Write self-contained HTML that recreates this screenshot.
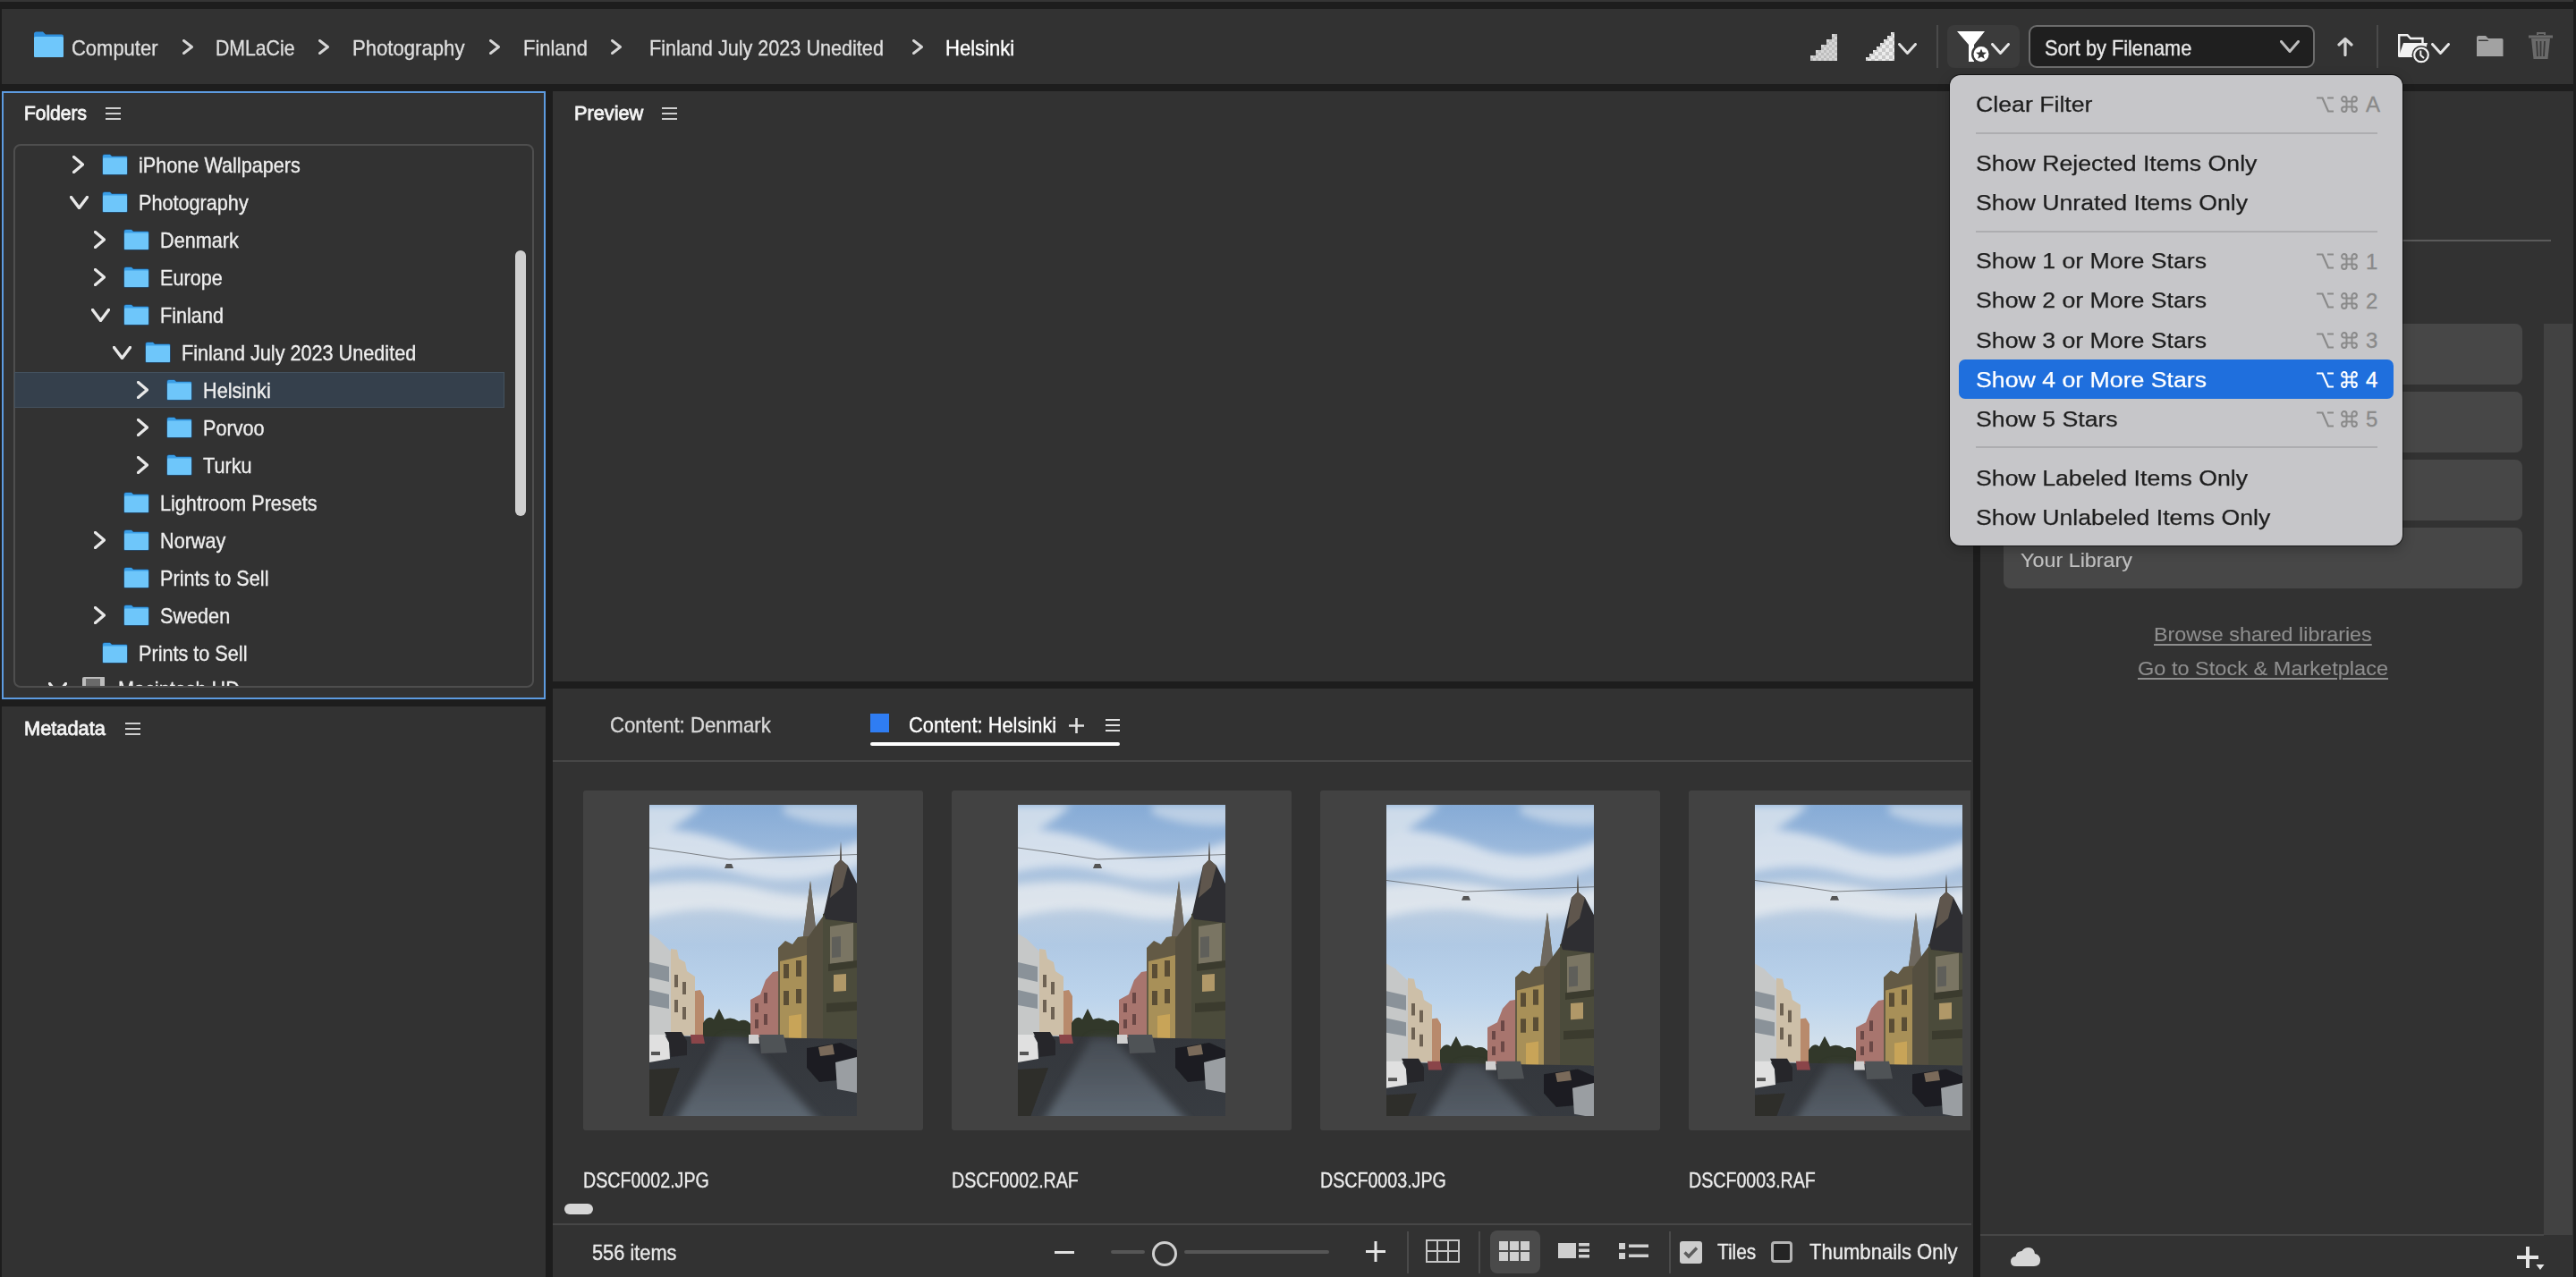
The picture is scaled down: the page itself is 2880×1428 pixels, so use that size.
<!DOCTYPE html><html><head><meta charset="utf-8"><style>
html,body{margin:0;padding:0}
body{width:2880px;height:1428px;position:relative;overflow:hidden;background:#1d1d1d;font-family:"Liberation Sans",sans-serif}
.t{position:absolute;white-space:nowrap}
.r{position:absolute;display:block}
</style></head><body>
<div class="r" style="left:0px;top:0px;width:2880px;height:2px;background:#353535;"></div>
<div class="r" style="left:2px;top:10px;width:2875px;height:84px;background:#323232;"></div>
<svg class="r" style="left:37px;top:34px;" width="35" height="31" viewBox="0 0 35 31"><path d="M1 4 Q1 1.5 3.5 1.5 L11 1.5 L14 4.5 L32 4.5 Q34 4.5 34 6.5 L34 28.5 Q34 30 32.5 30 L2.5 30 Q1 30 1 28.5 Z" fill="#2f8fdc"/><rect x="1" y="7" width="33" height="23" rx="1.5" fill="#6fc7fb"/></svg>
<div class="t" style="left:80px;top:42.69px;font-size:23.4px;line-height:23.4px;color:#dedede;font-weight:normal;-webkit-text-stroke:0.35px #dedede;transform:scaleX(0.9393);transform-origin:0 0;">Computer</div>
<div class="t" style="left:241px;top:42.69px;font-size:23.4px;line-height:23.4px;color:#dedede;font-weight:normal;-webkit-text-stroke:0.35px #dedede;transform:scaleX(0.9074);transform-origin:0 0;">DMLaCie</div>
<div class="t" style="left:394px;top:42.69px;font-size:23.4px;line-height:23.4px;color:#dedede;font-weight:normal;-webkit-text-stroke:0.35px #dedede;transform:scaleX(0.9458);transform-origin:0 0;">Photography</div>
<div class="t" style="left:585px;top:42.69px;font-size:23.4px;line-height:23.4px;color:#dedede;font-weight:normal;-webkit-text-stroke:0.35px #dedede;transform:scaleX(0.9382);transform-origin:0 0;">Finland</div>
<div class="t" style="left:725.5px;top:42.69px;font-size:23.4px;line-height:23.4px;color:#dedede;font-weight:normal;-webkit-text-stroke:0.35px #dedede;transform:scaleX(0.9239);transform-origin:0 0;">Finland July 2023 Unedited</div>
<div class="t" style="left:1056.7px;top:42.69px;font-size:23.4px;line-height:23.4px;color:#ffffff;font-weight:normal;-webkit-text-stroke:0.35px #ffffff;transform:scaleX(0.9436);transform-origin:0 0;">Helsinki</div>
<svg class="r" style="left:203.5px;top:43.5px;" width="12" height="17" viewBox="0 0 12 17"><path d="M1.5 1.5 L10.5 8.5 L1.5 15.5" fill="none" stroke="#d6d6d6" stroke-width="2.9" stroke-linecap="round" stroke-linejoin="round"/></svg>
<svg class="r" style="left:355.5px;top:43.5px;" width="12" height="17" viewBox="0 0 12 17"><path d="M1.5 1.5 L10.5 8.5 L1.5 15.5" fill="none" stroke="#d6d6d6" stroke-width="2.9" stroke-linecap="round" stroke-linejoin="round"/></svg>
<svg class="r" style="left:547px;top:43.5px;" width="12" height="17" viewBox="0 0 12 17"><path d="M1.5 1.5 L10.5 8.5 L1.5 15.5" fill="none" stroke="#d6d6d6" stroke-width="2.9" stroke-linecap="round" stroke-linejoin="round"/></svg>
<svg class="r" style="left:682.5px;top:43.5px;" width="12" height="17" viewBox="0 0 12 17"><path d="M1.5 1.5 L10.5 8.5 L1.5 15.5" fill="none" stroke="#d6d6d6" stroke-width="2.9" stroke-linecap="round" stroke-linejoin="round"/></svg>
<svg class="r" style="left:1019.5px;top:43.5px;" width="12" height="17" viewBox="0 0 12 17"><path d="M1.5 1.5 L10.5 8.5 L1.5 15.5" fill="none" stroke="#d6d6d6" stroke-width="2.9" stroke-linecap="round" stroke-linejoin="round"/></svg>
<svg class="r" style="left:2024px;top:38px;" width="30" height="30" viewBox="0 0 30 30"><rect x="0" y="24" width="3.05" height="3.05" fill="#d6d6d6"/><rect x="0" y="27" width="3.05" height="3.05" fill="#bdbdbd"/><rect x="3" y="24" width="3.05" height="3.05" fill="#bdbdbd"/><rect x="3" y="27" width="3.05" height="3.05" fill="#d6d6d6"/><rect x="6" y="24" width="3.05" height="3.05" fill="#d6d6d6"/><rect x="6" y="27" width="3.05" height="3.05" fill="#bdbdbd"/><rect x="9" y="24" width="3.05" height="3.05" fill="#bdbdbd"/><rect x="9" y="27" width="3.05" height="3.05" fill="#d6d6d6"/><rect x="6" y="18" width="3.05" height="3.05" fill="#d6d6d6"/><rect x="6" y="21" width="3.05" height="3.05" fill="#bdbdbd"/><rect x="9" y="18" width="3.05" height="3.05" fill="#bdbdbd"/><rect x="9" y="21" width="3.05" height="3.05" fill="#d6d6d6"/><rect x="12" y="24" width="3.05" height="3.05" fill="#d6d6d6"/><rect x="12" y="27" width="3.05" height="3.05" fill="#bdbdbd"/><rect x="15" y="24" width="3.05" height="3.05" fill="#bdbdbd"/><rect x="15" y="27" width="3.05" height="3.05" fill="#d6d6d6"/><rect x="12" y="18" width="3.05" height="3.05" fill="#d6d6d6"/><rect x="12" y="21" width="3.05" height="3.05" fill="#bdbdbd"/><rect x="15" y="18" width="3.05" height="3.05" fill="#bdbdbd"/><rect x="15" y="21" width="3.05" height="3.05" fill="#d6d6d6"/><rect x="12" y="12" width="3.05" height="3.05" fill="#d6d6d6"/><rect x="12" y="15" width="3.05" height="3.05" fill="#bdbdbd"/><rect x="15" y="12" width="3.05" height="3.05" fill="#bdbdbd"/><rect x="15" y="15" width="3.05" height="3.05" fill="#d6d6d6"/><rect x="18" y="24" width="3.05" height="3.05" fill="#d6d6d6"/><rect x="18" y="27" width="3.05" height="3.05" fill="#bdbdbd"/><rect x="21" y="24" width="3.05" height="3.05" fill="#bdbdbd"/><rect x="21" y="27" width="3.05" height="3.05" fill="#d6d6d6"/><rect x="18" y="18" width="3.05" height="3.05" fill="#d6d6d6"/><rect x="18" y="21" width="3.05" height="3.05" fill="#bdbdbd"/><rect x="21" y="18" width="3.05" height="3.05" fill="#bdbdbd"/><rect x="21" y="21" width="3.05" height="3.05" fill="#d6d6d6"/><rect x="18" y="12" width="3.05" height="3.05" fill="#d6d6d6"/><rect x="18" y="15" width="3.05" height="3.05" fill="#bdbdbd"/><rect x="21" y="12" width="3.05" height="3.05" fill="#bdbdbd"/><rect x="21" y="15" width="3.05" height="3.05" fill="#d6d6d6"/><rect x="18" y="6" width="3.05" height="3.05" fill="#d6d6d6"/><rect x="18" y="9" width="3.05" height="3.05" fill="#bdbdbd"/><rect x="21" y="6" width="3.05" height="3.05" fill="#bdbdbd"/><rect x="21" y="9" width="3.05" height="3.05" fill="#d6d6d6"/><rect x="24" y="24" width="3.05" height="3.05" fill="#d6d6d6"/><rect x="24" y="27" width="3.05" height="3.05" fill="#bdbdbd"/><rect x="27" y="24" width="3.05" height="3.05" fill="#bdbdbd"/><rect x="27" y="27" width="3.05" height="3.05" fill="#d6d6d6"/><rect x="24" y="18" width="3.05" height="3.05" fill="#d6d6d6"/><rect x="24" y="21" width="3.05" height="3.05" fill="#bdbdbd"/><rect x="27" y="18" width="3.05" height="3.05" fill="#bdbdbd"/><rect x="27" y="21" width="3.05" height="3.05" fill="#d6d6d6"/><rect x="24" y="12" width="3.05" height="3.05" fill="#d6d6d6"/><rect x="24" y="15" width="3.05" height="3.05" fill="#bdbdbd"/><rect x="27" y="12" width="3.05" height="3.05" fill="#bdbdbd"/><rect x="27" y="15" width="3.05" height="3.05" fill="#d6d6d6"/><rect x="24" y="6" width="3.05" height="3.05" fill="#d6d6d6"/><rect x="24" y="9" width="3.05" height="3.05" fill="#bdbdbd"/><rect x="27" y="6" width="3.05" height="3.05" fill="#bdbdbd"/><rect x="27" y="9" width="3.05" height="3.05" fill="#d6d6d6"/><rect x="24" y="0" width="3.05" height="3.05" fill="#d6d6d6"/><rect x="24" y="3" width="3.05" height="3.05" fill="#bdbdbd"/><rect x="27" y="0" width="3.05" height="3.05" fill="#bdbdbd"/><rect x="27" y="3" width="3.05" height="3.05" fill="#d6d6d6"/></svg>
<svg class="r" style="left:2086px;top:36px;" width="32" height="32" viewBox="0 0 32 32"><rect x="0" y="28" width="2.05" height="2.05" fill="#ececec"/><rect x="0" y="30" width="2.05" height="2.05" fill="#c9c9c9"/><rect x="2" y="28" width="2.05" height="2.05" fill="#c9c9c9"/><rect x="2" y="30" width="2.05" height="2.05" fill="#ececec"/><rect x="4" y="28" width="2.05" height="2.05" fill="#c9c9c9"/><rect x="4" y="30" width="2.05" height="2.05" fill="#ececec"/><rect x="6" y="28" width="2.05" height="2.05" fill="#ececec"/><rect x="6" y="30" width="2.05" height="2.05" fill="#c9c9c9"/><rect x="4" y="24" width="2.05" height="2.05" fill="#ececec"/><rect x="4" y="26" width="2.05" height="2.05" fill="#c9c9c9"/><rect x="6" y="24" width="2.05" height="2.05" fill="#c9c9c9"/><rect x="6" y="26" width="2.05" height="2.05" fill="#ececec"/><rect x="8" y="28" width="2.05" height="2.05" fill="#ececec"/><rect x="8" y="30" width="2.05" height="2.05" fill="#c9c9c9"/><rect x="10" y="28" width="2.05" height="2.05" fill="#c9c9c9"/><rect x="10" y="30" width="2.05" height="2.05" fill="#ececec"/><rect x="8" y="24" width="2.05" height="2.05" fill="#c9c9c9"/><rect x="8" y="26" width="2.05" height="2.05" fill="#ececec"/><rect x="10" y="24" width="2.05" height="2.05" fill="#ececec"/><rect x="10" y="26" width="2.05" height="2.05" fill="#c9c9c9"/><rect x="8" y="20" width="2.05" height="2.05" fill="#ececec"/><rect x="8" y="22" width="2.05" height="2.05" fill="#c9c9c9"/><rect x="10" y="20" width="2.05" height="2.05" fill="#c9c9c9"/><rect x="10" y="22" width="2.05" height="2.05" fill="#ececec"/><rect x="12" y="28" width="2.05" height="2.05" fill="#c9c9c9"/><rect x="12" y="30" width="2.05" height="2.05" fill="#ececec"/><rect x="14" y="28" width="2.05" height="2.05" fill="#ececec"/><rect x="14" y="30" width="2.05" height="2.05" fill="#c9c9c9"/><rect x="12" y="24" width="2.05" height="2.05" fill="#ececec"/><rect x="12" y="26" width="2.05" height="2.05" fill="#c9c9c9"/><rect x="14" y="24" width="2.05" height="2.05" fill="#c9c9c9"/><rect x="14" y="26" width="2.05" height="2.05" fill="#ececec"/><rect x="12" y="20" width="2.05" height="2.05" fill="#c9c9c9"/><rect x="12" y="22" width="2.05" height="2.05" fill="#ececec"/><rect x="14" y="20" width="2.05" height="2.05" fill="#ececec"/><rect x="14" y="22" width="2.05" height="2.05" fill="#c9c9c9"/><rect x="12" y="16" width="2.05" height="2.05" fill="#ececec"/><rect x="12" y="18" width="2.05" height="2.05" fill="#c9c9c9"/><rect x="14" y="16" width="2.05" height="2.05" fill="#c9c9c9"/><rect x="14" y="18" width="2.05" height="2.05" fill="#ececec"/><rect x="16" y="28" width="2.05" height="2.05" fill="#ececec"/><rect x="16" y="30" width="2.05" height="2.05" fill="#c9c9c9"/><rect x="18" y="28" width="2.05" height="2.05" fill="#c9c9c9"/><rect x="18" y="30" width="2.05" height="2.05" fill="#ececec"/><rect x="16" y="24" width="2.05" height="2.05" fill="#c9c9c9"/><rect x="16" y="26" width="2.05" height="2.05" fill="#ececec"/><rect x="18" y="24" width="2.05" height="2.05" fill="#ececec"/><rect x="18" y="26" width="2.05" height="2.05" fill="#c9c9c9"/><rect x="16" y="20" width="2.05" height="2.05" fill="#ececec"/><rect x="16" y="22" width="2.05" height="2.05" fill="#c9c9c9"/><rect x="18" y="20" width="2.05" height="2.05" fill="#c9c9c9"/><rect x="18" y="22" width="2.05" height="2.05" fill="#ececec"/><rect x="16" y="16" width="2.05" height="2.05" fill="#c9c9c9"/><rect x="16" y="18" width="2.05" height="2.05" fill="#ececec"/><rect x="18" y="16" width="2.05" height="2.05" fill="#ececec"/><rect x="18" y="18" width="2.05" height="2.05" fill="#c9c9c9"/><rect x="16" y="12" width="2.05" height="2.05" fill="#ececec"/><rect x="16" y="14" width="2.05" height="2.05" fill="#c9c9c9"/><rect x="18" y="12" width="2.05" height="2.05" fill="#c9c9c9"/><rect x="18" y="14" width="2.05" height="2.05" fill="#ececec"/><rect x="20" y="28" width="2.05" height="2.05" fill="#c9c9c9"/><rect x="20" y="30" width="2.05" height="2.05" fill="#ececec"/><rect x="22" y="28" width="2.05" height="2.05" fill="#ececec"/><rect x="22" y="30" width="2.05" height="2.05" fill="#c9c9c9"/><rect x="20" y="24" width="2.05" height="2.05" fill="#ececec"/><rect x="20" y="26" width="2.05" height="2.05" fill="#c9c9c9"/><rect x="22" y="24" width="2.05" height="2.05" fill="#c9c9c9"/><rect x="22" y="26" width="2.05" height="2.05" fill="#ececec"/><rect x="20" y="20" width="2.05" height="2.05" fill="#c9c9c9"/><rect x="20" y="22" width="2.05" height="2.05" fill="#ececec"/><rect x="22" y="20" width="2.05" height="2.05" fill="#ececec"/><rect x="22" y="22" width="2.05" height="2.05" fill="#c9c9c9"/><rect x="20" y="16" width="2.05" height="2.05" fill="#ececec"/><rect x="20" y="18" width="2.05" height="2.05" fill="#c9c9c9"/><rect x="22" y="16" width="2.05" height="2.05" fill="#c9c9c9"/><rect x="22" y="18" width="2.05" height="2.05" fill="#ececec"/><rect x="20" y="12" width="2.05" height="2.05" fill="#c9c9c9"/><rect x="20" y="14" width="2.05" height="2.05" fill="#ececec"/><rect x="22" y="12" width="2.05" height="2.05" fill="#ececec"/><rect x="22" y="14" width="2.05" height="2.05" fill="#c9c9c9"/><rect x="20" y="8" width="2.05" height="2.05" fill="#ececec"/><rect x="20" y="10" width="2.05" height="2.05" fill="#c9c9c9"/><rect x="22" y="8" width="2.05" height="2.05" fill="#c9c9c9"/><rect x="22" y="10" width="2.05" height="2.05" fill="#ececec"/><rect x="24" y="28" width="2.05" height="2.05" fill="#ececec"/><rect x="24" y="30" width="2.05" height="2.05" fill="#c9c9c9"/><rect x="26" y="28" width="2.05" height="2.05" fill="#c9c9c9"/><rect x="26" y="30" width="2.05" height="2.05" fill="#ececec"/><rect x="24" y="24" width="2.05" height="2.05" fill="#c9c9c9"/><rect x="24" y="26" width="2.05" height="2.05" fill="#ececec"/><rect x="26" y="24" width="2.05" height="2.05" fill="#ececec"/><rect x="26" y="26" width="2.05" height="2.05" fill="#c9c9c9"/><rect x="24" y="20" width="2.05" height="2.05" fill="#ececec"/><rect x="24" y="22" width="2.05" height="2.05" fill="#c9c9c9"/><rect x="26" y="20" width="2.05" height="2.05" fill="#c9c9c9"/><rect x="26" y="22" width="2.05" height="2.05" fill="#ececec"/><rect x="24" y="16" width="2.05" height="2.05" fill="#c9c9c9"/><rect x="24" y="18" width="2.05" height="2.05" fill="#ececec"/><rect x="26" y="16" width="2.05" height="2.05" fill="#ececec"/><rect x="26" y="18" width="2.05" height="2.05" fill="#c9c9c9"/><rect x="24" y="12" width="2.05" height="2.05" fill="#ececec"/><rect x="24" y="14" width="2.05" height="2.05" fill="#c9c9c9"/><rect x="26" y="12" width="2.05" height="2.05" fill="#c9c9c9"/><rect x="26" y="14" width="2.05" height="2.05" fill="#ececec"/><rect x="24" y="8" width="2.05" height="2.05" fill="#c9c9c9"/><rect x="24" y="10" width="2.05" height="2.05" fill="#ececec"/><rect x="26" y="8" width="2.05" height="2.05" fill="#ececec"/><rect x="26" y="10" width="2.05" height="2.05" fill="#c9c9c9"/><rect x="24" y="4" width="2.05" height="2.05" fill="#ececec"/><rect x="24" y="6" width="2.05" height="2.05" fill="#c9c9c9"/><rect x="26" y="4" width="2.05" height="2.05" fill="#c9c9c9"/><rect x="26" y="6" width="2.05" height="2.05" fill="#ececec"/><rect x="28" y="28" width="2.05" height="2.05" fill="#c9c9c9"/><rect x="28" y="30" width="2.05" height="2.05" fill="#ececec"/><rect x="30" y="28" width="2.05" height="2.05" fill="#ececec"/><rect x="30" y="30" width="2.05" height="2.05" fill="#c9c9c9"/><rect x="28" y="24" width="2.05" height="2.05" fill="#ececec"/><rect x="28" y="26" width="2.05" height="2.05" fill="#c9c9c9"/><rect x="30" y="24" width="2.05" height="2.05" fill="#c9c9c9"/><rect x="30" y="26" width="2.05" height="2.05" fill="#ececec"/><rect x="28" y="20" width="2.05" height="2.05" fill="#c9c9c9"/><rect x="28" y="22" width="2.05" height="2.05" fill="#ececec"/><rect x="30" y="20" width="2.05" height="2.05" fill="#ececec"/><rect x="30" y="22" width="2.05" height="2.05" fill="#c9c9c9"/><rect x="28" y="16" width="2.05" height="2.05" fill="#ececec"/><rect x="28" y="18" width="2.05" height="2.05" fill="#c9c9c9"/><rect x="30" y="16" width="2.05" height="2.05" fill="#c9c9c9"/><rect x="30" y="18" width="2.05" height="2.05" fill="#ececec"/><rect x="28" y="12" width="2.05" height="2.05" fill="#c9c9c9"/><rect x="28" y="14" width="2.05" height="2.05" fill="#ececec"/><rect x="30" y="12" width="2.05" height="2.05" fill="#ececec"/><rect x="30" y="14" width="2.05" height="2.05" fill="#c9c9c9"/><rect x="28" y="8" width="2.05" height="2.05" fill="#ececec"/><rect x="28" y="10" width="2.05" height="2.05" fill="#c9c9c9"/><rect x="30" y="8" width="2.05" height="2.05" fill="#c9c9c9"/><rect x="30" y="10" width="2.05" height="2.05" fill="#ececec"/><rect x="28" y="4" width="2.05" height="2.05" fill="#c9c9c9"/><rect x="28" y="6" width="2.05" height="2.05" fill="#ececec"/><rect x="30" y="4" width="2.05" height="2.05" fill="#ececec"/><rect x="30" y="6" width="2.05" height="2.05" fill="#c9c9c9"/><rect x="28" y="0" width="2.05" height="2.05" fill="#ececec"/><rect x="28" y="2" width="2.05" height="2.05" fill="#c9c9c9"/><rect x="30" y="0" width="2.05" height="2.05" fill="#c9c9c9"/><rect x="30" y="2" width="2.05" height="2.05" fill="#ececec"/></svg>
<svg class="r" style="left:2122px;top:48px;" width="21" height="13" viewBox="0 0 21 13"><path d="M1.5 1.5 L10.5 11.5 L19.5 1.5" fill="none" stroke="#e0e0e0" stroke-width="3" stroke-linecap="round" stroke-linejoin="round"/></svg>
<div class="r" style="left:2165px;top:28px;width:2px;height:48px;background:#4a4a4a;"></div>
<div class="r" style="left:2177px;top:28px;width:81px;height:48px;background:#3b3b3b;border-radius:8px;"></div>
<svg class="r" style="left:2188px;top:35px;" width="40" height="37" viewBox="0 0 40 37"><path d="M0 0 L31 0 L19 15 L19 34 L13 34 L13 15 Z" fill="#ffffff"/><circle cx="27" cy="25.5" r="11" fill="#3b3b3b"/><circle cx="27" cy="25.5" r="8.5" fill="#ffffff"/><path d="M27 19.5 L28.6 23.6 L33 23.8 L29.5 26.6 L30.8 30.8 L27 28.4 L23.2 30.8 L24.5 26.6 L21 23.8 L25.4 23.6 Z" fill="#333"/></svg>
<svg class="r" style="left:2226px;top:48px;" width="21" height="13" viewBox="0 0 21 13"><path d="M1.5 1.5 L10.5 11.5 L19.5 1.5" fill="none" stroke="#e6e6e6" stroke-width="3" stroke-linecap="round" stroke-linejoin="round"/></svg>
<div class="r" style="left:2268px;top:28px;width:320px;height:48px;background:#1f1f1f;border:2px solid #6c6c6c;border-radius:9px;box-sizing:border-box;"></div>
<div class="t" style="left:2285.7px;top:41.68px;font-size:24px;line-height:24px;color:#e8e8e8;font-weight:normal;-webkit-text-stroke:0.35px #e8e8e8;transform:scaleX(0.9058);transform-origin:0 0;">Sort by Filename</div>
<svg class="r" style="left:2549px;top:45px;" width="22" height="14" viewBox="0 0 22 14"><path d="M1.5 1.5 L11.0 12.5 L20.5 1.5" fill="none" stroke="#bdbdbd" stroke-width="3" stroke-linecap="round" stroke-linejoin="round"/></svg>
<svg class="r" style="left:2613px;top:41px;" width="18" height="22" viewBox="0 0 18 22"><path d="M9 20.5 L9 2.5 M2 9 L9 2.5 L16 9" fill="none" stroke="#d4d4d4" stroke-width="3.2" stroke-linecap="round" stroke-linejoin="round"/></svg>
<div class="r" style="left:2657px;top:28px;width:2px;height:48px;background:#4a4a4a;"></div>
<svg class="r" style="left:2681px;top:38px;" width="36" height="33" viewBox="0 0 36 33"><path d="M1.2 25.5 L1.2 1.2 L10.5 1.2 L14 5 L27.5 5 L27.5 10" fill="none" stroke="#f2f2f2" stroke-width="2.4"/><path d="M0.5 26 L6 10 L33 10 L28 26 Z" fill="#f2f2f2"/><circle cx="26" cy="23.4" r="10.5" fill="#323232"/><circle cx="26" cy="23.4" r="7.8" fill="none" stroke="#f2f2f2" stroke-width="2.2"/><path d="M25.3 18.5 L25.3 23.8 L29 27" fill="none" stroke="#f2f2f2" stroke-width="2"/></svg>
<svg class="r" style="left:2718px;top:48px;" width="21" height="13" viewBox="0 0 21 13"><path d="M1.5 1.5 L10.5 11.5 L19.5 1.5" fill="none" stroke="#e6e6e6" stroke-width="3" stroke-linecap="round" stroke-linejoin="round"/></svg>
<svg class="r" style="left:2769px;top:40px;" width="30" height="23" viewBox="0 0 30 23"><path d="M0 2 Q0 0 2 0 L10 0 L13 3 L28 3 Q29.5 3 29.5 4.5 L29.5 23 L0 23 Z" fill="#a2a2a2"/><path d="M2 4.5 L12 4.5 L13.5 6 L2 6 Z" fill="#3a3a3a"/></svg>
<svg class="r" style="left:2827px;top:36px;" width="28" height="31" viewBox="0 0 28 31"><path d="M10 3 L10 1 L18 1 L18 3" fill="none" stroke="#6a6a6a" stroke-width="2"/><rect x="0" y="3.5" width="27" height="3" fill="#6a6a6a"/><path d="M3 7 L5.5 30 L21.5 30 L24 7 Z" fill="#6a6a6a"/><path d="M9 10 L10 27 M13.5 10 L13.5 27 M18 10 L17 27" stroke="#3a3a3a" stroke-width="1.8"/></svg>
<div class="r" style="left:2px;top:102px;width:608px;height:680px;background:#323232;border:2px solid #5d9be0;box-sizing:border-box;"></div>
<div class="t" style="left:26.8px;top:116.05px;font-size:21.8px;line-height:21.8px;color:#f4f4f4;font-weight:normal;-webkit-text-stroke:0.8px #f4f4f4;transform:scaleX(0.9617);transform-origin:0 0;">Folders</div>
<svg class="r" style="left:118px;top:120px;" width="17" height="14" viewBox="0 0 17 14"><rect x="0" y="0" width="17" height="2" fill="#cfcfcf"/><rect x="0" y="6.0" width="17" height="2" fill="#cfcfcf"/><rect x="0" y="12" width="17" height="2" fill="#cfcfcf"/></svg>
<div class="r" style="left:15px;top:161px;width:582px;height:608px;background:transparent;border:2px solid #4e4e4e;border-radius:8px;box-sizing:border-box;"></div>
<div class="r" style="left:16px;top:416px;width:548px;height:40px;background:#35404c;border:1px solid #44525f;box-sizing:border-box;"></div>
<svg class="r" style="left:81.2px;top:173.7px;" width="13" height="20" viewBox="0 0 13 20"><path d="M1.5 1.5 L11.5 10.0 L1.5 18.5" fill="none" stroke="#e8e8e8" stroke-width="3.3" stroke-linecap="round" stroke-linejoin="round"/></svg>
<svg class="r" style="left:114px;top:172px;" width="29" height="24" viewBox="0 0 29 24"><path d="M0.5 2.5 Q0.5 0.5 2.5 0.5 L9 0.5 L11 2.5 L27 2.5 Q28.5 2.5 28.5 4 L28.5 22.5 Q28.5 23.5 27.5 23.5 L1.5 23.5 Q0.5 23.5 0.5 22.5 Z" fill="#1b5e99"/><path d="M1 3 Q1 1 3 1 L9 1 L11 3 L27 3 Q28 3 28 4 L28 5 L1 5 Z" fill="#3a9ee6"/><rect x="1" y="4.5" width="27" height="18.5" rx="0.8" fill="#6ec6fa"/></svg>
<div class="t" style="left:154.5px;top:174.19px;font-size:23.4px;line-height:23.4px;color:#eeeeee;font-weight:normal;-webkit-text-stroke:0.35px #eeeeee;transform:scaleX(0.9250);transform-origin:0 0;">iPhone Wallpapers</div>
<svg class="r" style="left:77.5px;top:218.5px;" width="21" height="15" viewBox="0 0 21 15"><path d="M1.5 1.5 L10.5 13.5 L19.5 1.5" fill="none" stroke="#e8e8e8" stroke-width="3.4" stroke-linecap="round" stroke-linejoin="round"/></svg>
<svg class="r" style="left:114px;top:214px;" width="29" height="24" viewBox="0 0 29 24"><path d="M0.5 2.5 Q0.5 0.5 2.5 0.5 L9 0.5 L11 2.5 L27 2.5 Q28.5 2.5 28.5 4 L28.5 22.5 Q28.5 23.5 27.5 23.5 L1.5 23.5 Q0.5 23.5 0.5 22.5 Z" fill="#1b5e99"/><path d="M1 3 Q1 1 3 1 L9 1 L11 3 L27 3 Q28 3 28 4 L28 5 L1 5 Z" fill="#3a9ee6"/><rect x="1" y="4.5" width="27" height="18.5" rx="0.8" fill="#6ec6fa"/></svg>
<div class="t" style="left:154.5px;top:216.19px;font-size:23.4px;line-height:23.4px;color:#eeeeee;font-weight:normal;-webkit-text-stroke:0.35px #eeeeee;transform:scaleX(0.9250);transform-origin:0 0;">Photography</div>
<svg class="r" style="left:105.2px;top:257.7px;" width="13" height="20" viewBox="0 0 13 20"><path d="M1.5 1.5 L11.5 10.0 L1.5 18.5" fill="none" stroke="#e8e8e8" stroke-width="3.3" stroke-linecap="round" stroke-linejoin="round"/></svg>
<svg class="r" style="left:138px;top:256px;" width="29" height="24" viewBox="0 0 29 24"><path d="M0.5 2.5 Q0.5 0.5 2.5 0.5 L9 0.5 L11 2.5 L27 2.5 Q28.5 2.5 28.5 4 L28.5 22.5 Q28.5 23.5 27.5 23.5 L1.5 23.5 Q0.5 23.5 0.5 22.5 Z" fill="#1b5e99"/><path d="M1 3 Q1 1 3 1 L9 1 L11 3 L27 3 Q28 3 28 4 L28 5 L1 5 Z" fill="#3a9ee6"/><rect x="1" y="4.5" width="27" height="18.5" rx="0.8" fill="#6ec6fa"/></svg>
<div class="t" style="left:178.5px;top:258.19px;font-size:23.4px;line-height:23.4px;color:#eeeeee;font-weight:normal;-webkit-text-stroke:0.35px #eeeeee;transform:scaleX(0.9250);transform-origin:0 0;">Denmark</div>
<svg class="r" style="left:105.2px;top:299.7px;" width="13" height="20" viewBox="0 0 13 20"><path d="M1.5 1.5 L11.5 10.0 L1.5 18.5" fill="none" stroke="#e8e8e8" stroke-width="3.3" stroke-linecap="round" stroke-linejoin="round"/></svg>
<svg class="r" style="left:138px;top:298px;" width="29" height="24" viewBox="0 0 29 24"><path d="M0.5 2.5 Q0.5 0.5 2.5 0.5 L9 0.5 L11 2.5 L27 2.5 Q28.5 2.5 28.5 4 L28.5 22.5 Q28.5 23.5 27.5 23.5 L1.5 23.5 Q0.5 23.5 0.5 22.5 Z" fill="#1b5e99"/><path d="M1 3 Q1 1 3 1 L9 1 L11 3 L27 3 Q28 3 28 4 L28 5 L1 5 Z" fill="#3a9ee6"/><rect x="1" y="4.5" width="27" height="18.5" rx="0.8" fill="#6ec6fa"/></svg>
<div class="t" style="left:178.5px;top:300.19px;font-size:23.4px;line-height:23.4px;color:#eeeeee;font-weight:normal;-webkit-text-stroke:0.35px #eeeeee;transform:scaleX(0.9250);transform-origin:0 0;">Europe</div>
<svg class="r" style="left:101.5px;top:344.5px;" width="21" height="15" viewBox="0 0 21 15"><path d="M1.5 1.5 L10.5 13.5 L19.5 1.5" fill="none" stroke="#e8e8e8" stroke-width="3.4" stroke-linecap="round" stroke-linejoin="round"/></svg>
<svg class="r" style="left:138px;top:340px;" width="29" height="24" viewBox="0 0 29 24"><path d="M0.5 2.5 Q0.5 0.5 2.5 0.5 L9 0.5 L11 2.5 L27 2.5 Q28.5 2.5 28.5 4 L28.5 22.5 Q28.5 23.5 27.5 23.5 L1.5 23.5 Q0.5 23.5 0.5 22.5 Z" fill="#1b5e99"/><path d="M1 3 Q1 1 3 1 L9 1 L11 3 L27 3 Q28 3 28 4 L28 5 L1 5 Z" fill="#3a9ee6"/><rect x="1" y="4.5" width="27" height="18.5" rx="0.8" fill="#6ec6fa"/></svg>
<div class="t" style="left:178.5px;top:342.19px;font-size:23.4px;line-height:23.4px;color:#eeeeee;font-weight:normal;-webkit-text-stroke:0.35px #eeeeee;transform:scaleX(0.9250);transform-origin:0 0;">Finland</div>
<svg class="r" style="left:125.5px;top:386.5px;" width="21" height="15" viewBox="0 0 21 15"><path d="M1.5 1.5 L10.5 13.5 L19.5 1.5" fill="none" stroke="#e8e8e8" stroke-width="3.4" stroke-linecap="round" stroke-linejoin="round"/></svg>
<svg class="r" style="left:162px;top:382px;" width="29" height="24" viewBox="0 0 29 24"><path d="M0.5 2.5 Q0.5 0.5 2.5 0.5 L9 0.5 L11 2.5 L27 2.5 Q28.5 2.5 28.5 4 L28.5 22.5 Q28.5 23.5 27.5 23.5 L1.5 23.5 Q0.5 23.5 0.5 22.5 Z" fill="#1b5e99"/><path d="M1 3 Q1 1 3 1 L9 1 L11 3 L27 3 Q28 3 28 4 L28 5 L1 5 Z" fill="#3a9ee6"/><rect x="1" y="4.5" width="27" height="18.5" rx="0.8" fill="#6ec6fa"/></svg>
<div class="t" style="left:202.5px;top:384.19px;font-size:23.4px;line-height:23.4px;color:#eeeeee;font-weight:normal;-webkit-text-stroke:0.35px #eeeeee;transform:scaleX(0.9250);transform-origin:0 0;">Finland July 2023 Unedited</div>
<svg class="r" style="left:153.2px;top:425.7px;" width="13" height="20" viewBox="0 0 13 20"><path d="M1.5 1.5 L11.5 10.0 L1.5 18.5" fill="none" stroke="#e8e8e8" stroke-width="3.3" stroke-linecap="round" stroke-linejoin="round"/></svg>
<svg class="r" style="left:186px;top:424px;" width="29" height="24" viewBox="0 0 29 24"><path d="M0.5 2.5 Q0.5 0.5 2.5 0.5 L9 0.5 L11 2.5 L27 2.5 Q28.5 2.5 28.5 4 L28.5 22.5 Q28.5 23.5 27.5 23.5 L1.5 23.5 Q0.5 23.5 0.5 22.5 Z" fill="#1b5e99"/><path d="M1 3 Q1 1 3 1 L9 1 L11 3 L27 3 Q28 3 28 4 L28 5 L1 5 Z" fill="#3a9ee6"/><rect x="1" y="4.5" width="27" height="18.5" rx="0.8" fill="#6ec6fa"/></svg>
<div class="t" style="left:226.5px;top:426.19px;font-size:23.4px;line-height:23.4px;color:#eeeeee;font-weight:normal;-webkit-text-stroke:0.35px #eeeeee;transform:scaleX(0.9250);transform-origin:0 0;">Helsinki</div>
<svg class="r" style="left:153.2px;top:467.7px;" width="13" height="20" viewBox="0 0 13 20"><path d="M1.5 1.5 L11.5 10.0 L1.5 18.5" fill="none" stroke="#e8e8e8" stroke-width="3.3" stroke-linecap="round" stroke-linejoin="round"/></svg>
<svg class="r" style="left:186px;top:466px;" width="29" height="24" viewBox="0 0 29 24"><path d="M0.5 2.5 Q0.5 0.5 2.5 0.5 L9 0.5 L11 2.5 L27 2.5 Q28.5 2.5 28.5 4 L28.5 22.5 Q28.5 23.5 27.5 23.5 L1.5 23.5 Q0.5 23.5 0.5 22.5 Z" fill="#1b5e99"/><path d="M1 3 Q1 1 3 1 L9 1 L11 3 L27 3 Q28 3 28 4 L28 5 L1 5 Z" fill="#3a9ee6"/><rect x="1" y="4.5" width="27" height="18.5" rx="0.8" fill="#6ec6fa"/></svg>
<div class="t" style="left:226.5px;top:468.19px;font-size:23.4px;line-height:23.4px;color:#eeeeee;font-weight:normal;-webkit-text-stroke:0.35px #eeeeee;transform:scaleX(0.9250);transform-origin:0 0;">Porvoo</div>
<svg class="r" style="left:153.2px;top:509.7px;" width="13" height="20" viewBox="0 0 13 20"><path d="M1.5 1.5 L11.5 10.0 L1.5 18.5" fill="none" stroke="#e8e8e8" stroke-width="3.3" stroke-linecap="round" stroke-linejoin="round"/></svg>
<svg class="r" style="left:186px;top:508px;" width="29" height="24" viewBox="0 0 29 24"><path d="M0.5 2.5 Q0.5 0.5 2.5 0.5 L9 0.5 L11 2.5 L27 2.5 Q28.5 2.5 28.5 4 L28.5 22.5 Q28.5 23.5 27.5 23.5 L1.5 23.5 Q0.5 23.5 0.5 22.5 Z" fill="#1b5e99"/><path d="M1 3 Q1 1 3 1 L9 1 L11 3 L27 3 Q28 3 28 4 L28 5 L1 5 Z" fill="#3a9ee6"/><rect x="1" y="4.5" width="27" height="18.5" rx="0.8" fill="#6ec6fa"/></svg>
<div class="t" style="left:226.5px;top:510.19px;font-size:23.4px;line-height:23.4px;color:#eeeeee;font-weight:normal;-webkit-text-stroke:0.35px #eeeeee;transform:scaleX(0.9250);transform-origin:0 0;">Turku</div>
<svg class="r" style="left:138px;top:550px;" width="29" height="24" viewBox="0 0 29 24"><path d="M0.5 2.5 Q0.5 0.5 2.5 0.5 L9 0.5 L11 2.5 L27 2.5 Q28.5 2.5 28.5 4 L28.5 22.5 Q28.5 23.5 27.5 23.5 L1.5 23.5 Q0.5 23.5 0.5 22.5 Z" fill="#1b5e99"/><path d="M1 3 Q1 1 3 1 L9 1 L11 3 L27 3 Q28 3 28 4 L28 5 L1 5 Z" fill="#3a9ee6"/><rect x="1" y="4.5" width="27" height="18.5" rx="0.8" fill="#6ec6fa"/></svg>
<div class="t" style="left:178.5px;top:552.19px;font-size:23.4px;line-height:23.4px;color:#eeeeee;font-weight:normal;-webkit-text-stroke:0.35px #eeeeee;transform:scaleX(0.9250);transform-origin:0 0;">Lightroom Presets</div>
<svg class="r" style="left:105.2px;top:593.7px;" width="13" height="20" viewBox="0 0 13 20"><path d="M1.5 1.5 L11.5 10.0 L1.5 18.5" fill="none" stroke="#e8e8e8" stroke-width="3.3" stroke-linecap="round" stroke-linejoin="round"/></svg>
<svg class="r" style="left:138px;top:592px;" width="29" height="24" viewBox="0 0 29 24"><path d="M0.5 2.5 Q0.5 0.5 2.5 0.5 L9 0.5 L11 2.5 L27 2.5 Q28.5 2.5 28.5 4 L28.5 22.5 Q28.5 23.5 27.5 23.5 L1.5 23.5 Q0.5 23.5 0.5 22.5 Z" fill="#1b5e99"/><path d="M1 3 Q1 1 3 1 L9 1 L11 3 L27 3 Q28 3 28 4 L28 5 L1 5 Z" fill="#3a9ee6"/><rect x="1" y="4.5" width="27" height="18.5" rx="0.8" fill="#6ec6fa"/></svg>
<div class="t" style="left:178.5px;top:594.19px;font-size:23.4px;line-height:23.4px;color:#eeeeee;font-weight:normal;-webkit-text-stroke:0.35px #eeeeee;transform:scaleX(0.9250);transform-origin:0 0;">Norway</div>
<svg class="r" style="left:138px;top:634px;" width="29" height="24" viewBox="0 0 29 24"><path d="M0.5 2.5 Q0.5 0.5 2.5 0.5 L9 0.5 L11 2.5 L27 2.5 Q28.5 2.5 28.5 4 L28.5 22.5 Q28.5 23.5 27.5 23.5 L1.5 23.5 Q0.5 23.5 0.5 22.5 Z" fill="#1b5e99"/><path d="M1 3 Q1 1 3 1 L9 1 L11 3 L27 3 Q28 3 28 4 L28 5 L1 5 Z" fill="#3a9ee6"/><rect x="1" y="4.5" width="27" height="18.5" rx="0.8" fill="#6ec6fa"/></svg>
<div class="t" style="left:178.5px;top:636.19px;font-size:23.4px;line-height:23.4px;color:#eeeeee;font-weight:normal;-webkit-text-stroke:0.35px #eeeeee;transform:scaleX(0.9250);transform-origin:0 0;">Prints to Sell</div>
<svg class="r" style="left:105.2px;top:677.7px;" width="13" height="20" viewBox="0 0 13 20"><path d="M1.5 1.5 L11.5 10.0 L1.5 18.5" fill="none" stroke="#e8e8e8" stroke-width="3.3" stroke-linecap="round" stroke-linejoin="round"/></svg>
<svg class="r" style="left:138px;top:676px;" width="29" height="24" viewBox="0 0 29 24"><path d="M0.5 2.5 Q0.5 0.5 2.5 0.5 L9 0.5 L11 2.5 L27 2.5 Q28.5 2.5 28.5 4 L28.5 22.5 Q28.5 23.5 27.5 23.5 L1.5 23.5 Q0.5 23.5 0.5 22.5 Z" fill="#1b5e99"/><path d="M1 3 Q1 1 3 1 L9 1 L11 3 L27 3 Q28 3 28 4 L28 5 L1 5 Z" fill="#3a9ee6"/><rect x="1" y="4.5" width="27" height="18.5" rx="0.8" fill="#6ec6fa"/></svg>
<div class="t" style="left:178.5px;top:678.19px;font-size:23.4px;line-height:23.4px;color:#eeeeee;font-weight:normal;-webkit-text-stroke:0.35px #eeeeee;transform:scaleX(0.9250);transform-origin:0 0;">Sweden</div>
<svg class="r" style="left:114px;top:718px;" width="29" height="24" viewBox="0 0 29 24"><path d="M0.5 2.5 Q0.5 0.5 2.5 0.5 L9 0.5 L11 2.5 L27 2.5 Q28.5 2.5 28.5 4 L28.5 22.5 Q28.5 23.5 27.5 23.5 L1.5 23.5 Q0.5 23.5 0.5 22.5 Z" fill="#1b5e99"/><path d="M1 3 Q1 1 3 1 L9 1 L11 3 L27 3 Q28 3 28 4 L28 5 L1 5 Z" fill="#3a9ee6"/><rect x="1" y="4.5" width="27" height="18.5" rx="0.8" fill="#6ec6fa"/></svg>
<div class="t" style="left:154.5px;top:720.19px;font-size:23.4px;line-height:23.4px;color:#eeeeee;font-weight:normal;-webkit-text-stroke:0.35px #eeeeee;transform:scaleX(0.9250);transform-origin:0 0;">Prints to Sell</div>
<div class="r" style="left:17px;top:740px;width:578px;height:27px;overflow:hidden"><svg class="r" style="left:36.5px;top:22.5px;" width="21" height="15" viewBox="0 0 21 15"><path d="M1.5 1.5 L10.5 13.5 L19.5 1.5" fill="none" stroke="#e8e8e8" stroke-width="3.4" stroke-linecap="round" stroke-linejoin="round"/></svg>
<svg class="r" style="left:74.5px;top:17px;" width="25" height="26" viewBox="0 0 25 26"><rect x="0" y="0" width="26" height="26" rx="2" fill="#bcbcbc"/><rect x="4" y="2" width="16" height="8" fill="#6a6a6a"/></svg>
<div class="t" style="left:114.5px;top:20.19px;font-size:23.4px;line-height:23.4px;color:#eeeeee;font-weight:normal;-webkit-text-stroke:0.35px #eeeeee;transform:scaleX(0.9250);transform-origin:0 0;">Macintosh HD</div>
</div>
<div class="r" style="left:576px;top:280px;width:12px;height:297px;background:#cfcfcf;border-radius:6px;"></div>
<div class="r" style="left:2px;top:790px;width:608px;height:638px;background:#323232;"></div>
<div class="t" style="left:26.8px;top:803.95px;font-size:21.8px;line-height:21.8px;color:#f4f4f4;font-weight:normal;-webkit-text-stroke:0.8px #f4f4f4;transform:scaleX(1.0002);transform-origin:0 0;">Metadata</div>
<svg class="r" style="left:140px;top:808px;" width="17" height="14" viewBox="0 0 17 14"><rect x="0" y="0" width="17" height="2" fill="#cfcfcf"/><rect x="0" y="6.0" width="17" height="2" fill="#cfcfcf"/><rect x="0" y="12" width="17" height="2" fill="#cfcfcf"/></svg>
<div class="r" style="left:618px;top:102px;width:1588px;height:660px;background:#323232;"></div>
<div class="t" style="left:642.3px;top:116.05px;font-size:21.8px;line-height:21.8px;color:#f4f4f4;font-weight:normal;-webkit-text-stroke:0.8px #f4f4f4;transform:scaleX(0.9970);transform-origin:0 0;">Preview</div>
<svg class="r" style="left:740px;top:120px;" width="17" height="14" viewBox="0 0 17 14"><rect x="0" y="0" width="17" height="2" fill="#cfcfcf"/><rect x="0" y="6.0" width="17" height="2" fill="#cfcfcf"/><rect x="0" y="12" width="17" height="2" fill="#cfcfcf"/></svg>
<div class="r" style="left:618px;top:770px;width:1588px;height:658px;background:#323232;"></div>
<div class="t" style="left:681.8px;top:799.18px;font-size:24px;line-height:24px;color:#d8d8d8;font-weight:normal;-webkit-text-stroke:0.35px #d8d8d8;transform:scaleX(0.9233);transform-origin:0 0;">Content: Denmark</div>
<div class="r" style="left:973px;top:798px;width:21px;height:21px;background:#2f7df3;"></div>
<div class="t" style="left:1016.4px;top:799.18px;font-size:24px;line-height:24px;color:#ffffff;font-weight:normal;-webkit-text-stroke:0.35px #ffffff;transform:scaleX(0.9106);transform-origin:0 0;">Content: Helsinki</div>
<svg class="r" style="left:1195px;top:803px;" width="17" height="17" viewBox="0 0 17 17"><path d="M8.5 0 L8.5 17 M0 8.5 L17 8.5" stroke="#e0e0e0" stroke-width="2.6"/></svg>
<svg class="r" style="left:1236px;top:804px;" width="16" height="14" viewBox="0 0 16 14"><rect x="0" y="0" width="16" height="2" fill="#e0e0e0"/><rect x="0" y="6.0" width="16" height="2" fill="#e0e0e0"/><rect x="0" y="12" width="16" height="2" fill="#e0e0e0"/></svg>
<div class="r" style="left:973px;top:830px;width:279px;height:4px;background:#ffffff;border-radius:2px;"></div>
<div class="r" style="left:618px;top:850px;width:1586px;height:2px;background:#474747;"></div>
<div class="r" style="left:652px;top:884px;width:380px;height:380px;background:#424242;border-radius:3px;"></div>
<svg class="r" style="left:726px;top:900px;overflow:hidden;" width="232" height="348" viewBox="0 0 232 348"><defs><linearGradient id="p0sky" x1="0" y1="0" x2="0" y2="1"><stop offset="0" stop-color="#86abd6"/><stop offset="0.15" stop-color="#9bb9dc"/><stop offset="0.32" stop-color="#bccde0"/><stop offset="0.45" stop-color="#b0c9e4"/><stop offset="0.62" stop-color="#bcd4ec"/><stop offset="0.78" stop-color="#d4e1ec"/></linearGradient>
<linearGradient id="p0road" x1="0" y1="0" x2="0" y2="1"><stop offset="0" stop-color="#34373c"/><stop offset="1" stop-color="#3a3f45"/></linearGradient>
<linearGradient id="p0rc" x1="0" y1="0" x2="0" y2="1"><stop offset="0" stop-color="#4a5058"/><stop offset="1" stop-color="#6a7682"/></linearGradient>
<filter id="p0b1" x="-10%" y="-10%" width="120%" height="120%"><feGaussianBlur stdDeviation="0.7"/></filter>
<filter id="p0b5" x="-30%" y="-30%" width="160%" height="160%"><feGaussianBlur stdDeviation="5"/></filter></defs>
<rect width="232" height="348" fill="url(#p0sky)"/>
<g filter="url(#p0b5)" opacity="0.8">
<path d="M-20 30 Q40 20 110 50 Q170 70 250 35 L250 62 Q170 95 105 78 Q45 60 -20 80 Z" fill="#e4eaf1"/>
<path d="M-20 92 Q70 78 130 96 Q190 112 250 88 L250 112 Q180 136 115 122 Q50 108 -20 132 Z" fill="#e6ebf0"/>
<path d="M-20 0 L60 0 Q30 30 -20 45 Z" fill="#dfe7ef"/>
<path d="M150 0 L250 0 L250 20 Q200 30 150 10 Z" fill="#c9d8e8"/>
</g>
<g transform="matrix(1,0,0,1,0,0)">
<path d="M0 48 Q45 54 89 61 Q160 58 232 55.5" stroke="#3d3d3d" stroke-width="0.6" fill="none"/>
<path d="M86 66 L92 66 L94 71 L84 71 Z" fill="#555"/>
<g filter="url(#p0b1)">
<path d="M0 144 L10 150 L24 164 L24 258 L0 258 Z" fill="#c6c8c8"/>
<path d="M0 176 L22 181 L22 198 L0 193 Z M0 207 L22 212 L22 228 L0 224 Z" fill="#8a9299"/>
<path d="M24 161 L31 162 L33 172 L40 176 L42 186 L51 192 L51 258 L24 258 Z" fill="#cdbfa8"/>
<path d="M28 190 L32 190 L32 204 L28 204 Z M37 198 L41 198 L41 212 L37 212 Z M28 218 L32 218 L32 232 L28 232 Z M37 226 L41 226 L41 240 L37 240 Z" fill="#6e6252"/>
<path d="M51 208 L57 207 L61 214 L61 258 L51 258 Z" fill="#b88a6c"/>
<path d="M60 244 Q66 234 72 240 L78 228 L84 240 Q92 236 100 242 Q108 238 114 246 L114 262 L60 262 Z" fill="#30372a"/>
<path d="M113 218 L124 212 L130 196 L138 187 L144 186 L144 262 L113 262 Z" fill="#a8746e"/>
<path d="M118 222 L122 222 L122 232 L118 232 Z M128 210 L132 210 L132 222 L128 222 Z M128 234 L132 234 L132 246 L128 246 Z M118 240 L122 240 L122 250 L118 250 Z" fill="#6a4644"/>
<path d="M144 160 L152 152 L160 156 L166 148 L172 147 L180 85 L187 147 L196 122 L196 266 L144 266 Z" fill="#645a44"/>
<path d="M146 175 L176 168 L176 266 L146 266 Z" fill="#a89058"/>
<path d="M150 178 L156 178 L156 194 L150 194 Z M164 174 L170 174 L170 192 L164 192 Z M150 208 L156 208 L156 224 L150 224 Z M164 206 L170 206 L170 222 L164 222 Z" fill="#5a4e34"/>
<path d="M156 236 L170 234 L170 266 L156 266 Z" fill="#c8a458"/>
<path d="M172 147 L180 85 L187 147 Z" fill="#6e685e"/>
<path d="M176 150 L196 122 L196 268 L176 268 Z" fill="#545040"/>
<path d="M194 122 L232 108 L232 272 L194 270 Z" fill="#4c4b3a"/>
<path d="M195 122 L207 68 L213 62 L214 41 L215 62 L222 68 L232 88 L232 132 L197 128 Z" fill="#2e2e30"/>
<path d="M207 68 L213 62 L214 41 L215 62 L222 68 L216 92 L202 104 Z" fill="#6a6256" opacity="0.8"/>
<path d="M202 136 L228 132 L228 175 L202 178 Z" fill="#7a7464"/>
<path d="M204 148 L214 147 L214 170 L204 171 Z" fill="#5e5e5a"/>
<path d="M200 178 L232 174 L232 182 L200 186 Z" fill="#3a3a2e"/>
<path d="M206 190 L220 189 L220 208 L206 209 Z" fill="#b09868"/>
<path d="M198 222 L232 220 L232 230 L198 232 Z" fill="#3a3a2e"/>
</g>
<path d="M0 258 L232 262 L232 420 L0 420 Z" fill="url(#p0road)"/>
<path d="M82 261 L106 261 L195 360 L25 360 Z" fill="url(#p0rc)" opacity="0.8" filter="url(#p0b5)"/>
<path d="M0 296 L34 294 L10 360 L0 360 Z" fill="#2e2d2a" filter="url(#p0b1)"/>
<g filter="url(#p0b1)">
<path d="M0 257 L17 257 L22 266 L23 284 L0 288 Z" fill="#e0e0e0"/>
<path d="M2 276 L12 276 L12 280 L2 280 Z" fill="#555"/>
<path d="M17 254 L36 254 L42 264 L42 280 L24 282 L22 265 Z" fill="#26282c"/>
<path d="M46 257 L60 257 L62 267 L47 267 Z" fill="#8a4448"/>
<path d="M111 257 L122 257 L123 267 L111 267 Z" fill="#cfcfcf"/>
<path d="M123 257 L150 257 L154 277 L125 278 Z" fill="#505256"/>
<path d="M176 272 L214 266 L232 274 L232 306 L190 310 L176 294 Z" fill="#1c1e22"/>
<path d="M189 271 L205 268 L207 279 L191 281 Z" fill="#7a6a5a"/>
<path d="M208 288 L232 282 L232 322 L210 318 Z" fill="#9a9ea2"/>
</g>
</g></svg>
<div class="t" style="left:652px;top:1308.05px;font-size:24.4px;line-height:24.4px;color:#ececec;font-weight:normal;-webkit-text-stroke:0.35px #ececec;transform:scaleX(0.8050);transform-origin:0 0;">DSCF0002.JPG</div>
<div class="r" style="left:1064px;top:884px;width:380px;height:380px;background:#424242;border-radius:3px;"></div>
<svg class="r" style="left:1138px;top:900px;overflow:hidden;" width="232" height="348" viewBox="0 0 232 348"><defs><linearGradient id="p1sky" x1="0" y1="0" x2="0" y2="1"><stop offset="0" stop-color="#86abd6"/><stop offset="0.15" stop-color="#9bb9dc"/><stop offset="0.32" stop-color="#bccde0"/><stop offset="0.45" stop-color="#b0c9e4"/><stop offset="0.62" stop-color="#bcd4ec"/><stop offset="0.78" stop-color="#d4e1ec"/></linearGradient>
<linearGradient id="p1road" x1="0" y1="0" x2="0" y2="1"><stop offset="0" stop-color="#34373c"/><stop offset="1" stop-color="#3a3f45"/></linearGradient>
<linearGradient id="p1rc" x1="0" y1="0" x2="0" y2="1"><stop offset="0" stop-color="#4a5058"/><stop offset="1" stop-color="#6a7682"/></linearGradient>
<filter id="p1b1" x="-10%" y="-10%" width="120%" height="120%"><feGaussianBlur stdDeviation="0.7"/></filter>
<filter id="p1b5" x="-30%" y="-30%" width="160%" height="160%"><feGaussianBlur stdDeviation="5"/></filter></defs>
<rect width="232" height="348" fill="url(#p1sky)"/>
<g filter="url(#p1b5)" opacity="0.8">
<path d="M-20 30 Q40 20 110 50 Q170 70 250 35 L250 62 Q170 95 105 78 Q45 60 -20 80 Z" fill="#e4eaf1"/>
<path d="M-20 92 Q70 78 130 96 Q190 112 250 88 L250 112 Q180 136 115 122 Q50 108 -20 132 Z" fill="#e6ebf0"/>
<path d="M-20 0 L60 0 Q30 30 -20 45 Z" fill="#dfe7ef"/>
<path d="M150 0 L250 0 L250 20 Q200 30 150 10 Z" fill="#c9d8e8"/>
</g>
<g transform="matrix(1,0,0,1,0,0)">
<path d="M0 48 Q45 54 89 61 Q160 58 232 55.5" stroke="#3d3d3d" stroke-width="0.6" fill="none"/>
<path d="M86 66 L92 66 L94 71 L84 71 Z" fill="#555"/>
<g filter="url(#p1b1)">
<path d="M0 144 L10 150 L24 164 L24 258 L0 258 Z" fill="#c6c8c8"/>
<path d="M0 176 L22 181 L22 198 L0 193 Z M0 207 L22 212 L22 228 L0 224 Z" fill="#8a9299"/>
<path d="M24 161 L31 162 L33 172 L40 176 L42 186 L51 192 L51 258 L24 258 Z" fill="#cdbfa8"/>
<path d="M28 190 L32 190 L32 204 L28 204 Z M37 198 L41 198 L41 212 L37 212 Z M28 218 L32 218 L32 232 L28 232 Z M37 226 L41 226 L41 240 L37 240 Z" fill="#6e6252"/>
<path d="M51 208 L57 207 L61 214 L61 258 L51 258 Z" fill="#b88a6c"/>
<path d="M60 244 Q66 234 72 240 L78 228 L84 240 Q92 236 100 242 Q108 238 114 246 L114 262 L60 262 Z" fill="#30372a"/>
<path d="M113 218 L124 212 L130 196 L138 187 L144 186 L144 262 L113 262 Z" fill="#a8746e"/>
<path d="M118 222 L122 222 L122 232 L118 232 Z M128 210 L132 210 L132 222 L128 222 Z M128 234 L132 234 L132 246 L128 246 Z M118 240 L122 240 L122 250 L118 250 Z" fill="#6a4644"/>
<path d="M144 160 L152 152 L160 156 L166 148 L172 147 L180 85 L187 147 L196 122 L196 266 L144 266 Z" fill="#645a44"/>
<path d="M146 175 L176 168 L176 266 L146 266 Z" fill="#a89058"/>
<path d="M150 178 L156 178 L156 194 L150 194 Z M164 174 L170 174 L170 192 L164 192 Z M150 208 L156 208 L156 224 L150 224 Z M164 206 L170 206 L170 222 L164 222 Z" fill="#5a4e34"/>
<path d="M156 236 L170 234 L170 266 L156 266 Z" fill="#c8a458"/>
<path d="M172 147 L180 85 L187 147 Z" fill="#6e685e"/>
<path d="M176 150 L196 122 L196 268 L176 268 Z" fill="#545040"/>
<path d="M194 122 L232 108 L232 272 L194 270 Z" fill="#4c4b3a"/>
<path d="M195 122 L207 68 L213 62 L214 41 L215 62 L222 68 L232 88 L232 132 L197 128 Z" fill="#2e2e30"/>
<path d="M207 68 L213 62 L214 41 L215 62 L222 68 L216 92 L202 104 Z" fill="#6a6256" opacity="0.8"/>
<path d="M202 136 L228 132 L228 175 L202 178 Z" fill="#7a7464"/>
<path d="M204 148 L214 147 L214 170 L204 171 Z" fill="#5e5e5a"/>
<path d="M200 178 L232 174 L232 182 L200 186 Z" fill="#3a3a2e"/>
<path d="M206 190 L220 189 L220 208 L206 209 Z" fill="#b09868"/>
<path d="M198 222 L232 220 L232 230 L198 232 Z" fill="#3a3a2e"/>
</g>
<path d="M0 258 L232 262 L232 420 L0 420 Z" fill="url(#p1road)"/>
<path d="M82 261 L106 261 L195 360 L25 360 Z" fill="url(#p1rc)" opacity="0.8" filter="url(#p1b5)"/>
<path d="M0 296 L34 294 L10 360 L0 360 Z" fill="#2e2d2a" filter="url(#p1b1)"/>
<g filter="url(#p1b1)">
<path d="M0 257 L17 257 L22 266 L23 284 L0 288 Z" fill="#e0e0e0"/>
<path d="M2 276 L12 276 L12 280 L2 280 Z" fill="#555"/>
<path d="M17 254 L36 254 L42 264 L42 280 L24 282 L22 265 Z" fill="#26282c"/>
<path d="M46 257 L60 257 L62 267 L47 267 Z" fill="#8a4448"/>
<path d="M111 257 L122 257 L123 267 L111 267 Z" fill="#cfcfcf"/>
<path d="M123 257 L150 257 L154 277 L125 278 Z" fill="#505256"/>
<path d="M176 272 L214 266 L232 274 L232 306 L190 310 L176 294 Z" fill="#1c1e22"/>
<path d="M189 271 L205 268 L207 279 L191 281 Z" fill="#7a6a5a"/>
<path d="M208 288 L232 282 L232 322 L210 318 Z" fill="#9a9ea2"/>
</g>
</g></svg>
<div class="t" style="left:1064px;top:1308.05px;font-size:24.4px;line-height:24.4px;color:#ececec;font-weight:normal;-webkit-text-stroke:0.35px #ececec;transform:scaleX(0.8050);transform-origin:0 0;">DSCF0002.RAF</div>
<div class="r" style="left:1476px;top:884px;width:380px;height:380px;background:#424242;border-radius:3px;"></div>
<svg class="r" style="left:1550px;top:900px;overflow:hidden;" width="232" height="348" viewBox="0 0 232 348"><defs><linearGradient id="p2sky" x1="0" y1="0" x2="0" y2="1"><stop offset="0" stop-color="#86abd6"/><stop offset="0.15" stop-color="#9bb9dc"/><stop offset="0.32" stop-color="#bccde0"/><stop offset="0.45" stop-color="#b0c9e4"/><stop offset="0.62" stop-color="#bcd4ec"/><stop offset="0.78" stop-color="#d4e1ec"/></linearGradient>
<linearGradient id="p2road" x1="0" y1="0" x2="0" y2="1"><stop offset="0" stop-color="#34373c"/><stop offset="1" stop-color="#3a3f45"/></linearGradient>
<linearGradient id="p2rc" x1="0" y1="0" x2="0" y2="1"><stop offset="0" stop-color="#4a5058"/><stop offset="1" stop-color="#6a7682"/></linearGradient>
<filter id="p2b1" x="-10%" y="-10%" width="120%" height="120%"><feGaussianBlur stdDeviation="0.7"/></filter>
<filter id="p2b5" x="-30%" y="-30%" width="160%" height="160%"><feGaussianBlur stdDeviation="5"/></filter></defs>
<rect width="232" height="348" fill="url(#p2sky)"/>
<g filter="url(#p2b5)" opacity="0.8">
<path d="M-20 30 Q40 20 110 50 Q170 70 250 35 L250 62 Q170 95 105 78 Q45 60 -20 80 Z" fill="#e4eaf1"/>
<path d="M-20 92 Q70 78 130 96 Q190 112 250 88 L250 112 Q180 136 115 122 Q50 108 -20 132 Z" fill="#e6ebf0"/>
<path d="M-20 0 L60 0 Q30 30 -20 45 Z" fill="#dfe7ef"/>
<path d="M150 0 L250 0 L250 20 Q200 30 150 10 Z" fill="#c9d8e8"/>
</g>
<g transform="matrix(1,0,0,0.968,0,38)">
<path d="M0 48 Q45 54 89 61 Q160 58 232 55.5" stroke="#3d3d3d" stroke-width="0.6" fill="none"/>
<path d="M86 66 L92 66 L94 71 L84 71 Z" fill="#555"/>
<g filter="url(#p2b1)">
<path d="M0 144 L10 150 L24 164 L24 258 L0 258 Z" fill="#c6c8c8"/>
<path d="M0 176 L22 181 L22 198 L0 193 Z M0 207 L22 212 L22 228 L0 224 Z" fill="#8a9299"/>
<path d="M24 161 L31 162 L33 172 L40 176 L42 186 L51 192 L51 258 L24 258 Z" fill="#cdbfa8"/>
<path d="M28 190 L32 190 L32 204 L28 204 Z M37 198 L41 198 L41 212 L37 212 Z M28 218 L32 218 L32 232 L28 232 Z M37 226 L41 226 L41 240 L37 240 Z" fill="#6e6252"/>
<path d="M51 208 L57 207 L61 214 L61 258 L51 258 Z" fill="#b88a6c"/>
<path d="M60 244 Q66 234 72 240 L78 228 L84 240 Q92 236 100 242 Q108 238 114 246 L114 262 L60 262 Z" fill="#30372a"/>
<path d="M113 218 L124 212 L130 196 L138 187 L144 186 L144 262 L113 262 Z" fill="#a8746e"/>
<path d="M118 222 L122 222 L122 232 L118 232 Z M128 210 L132 210 L132 222 L128 222 Z M128 234 L132 234 L132 246 L128 246 Z M118 240 L122 240 L122 250 L118 250 Z" fill="#6a4644"/>
<path d="M144 160 L152 152 L160 156 L166 148 L172 147 L180 85 L187 147 L196 122 L196 266 L144 266 Z" fill="#645a44"/>
<path d="M146 175 L176 168 L176 266 L146 266 Z" fill="#a89058"/>
<path d="M150 178 L156 178 L156 194 L150 194 Z M164 174 L170 174 L170 192 L164 192 Z M150 208 L156 208 L156 224 L150 224 Z M164 206 L170 206 L170 222 L164 222 Z" fill="#5a4e34"/>
<path d="M156 236 L170 234 L170 266 L156 266 Z" fill="#c8a458"/>
<path d="M172 147 L180 85 L187 147 Z" fill="#6e685e"/>
<path d="M176 150 L196 122 L196 268 L176 268 Z" fill="#545040"/>
<path d="M194 122 L232 108 L232 272 L194 270 Z" fill="#4c4b3a"/>
<path d="M195 122 L207 68 L213 62 L214 41 L215 62 L222 68 L232 88 L232 132 L197 128 Z" fill="#2e2e30"/>
<path d="M207 68 L213 62 L214 41 L215 62 L222 68 L216 92 L202 104 Z" fill="#6a6256" opacity="0.8"/>
<path d="M202 136 L228 132 L228 175 L202 178 Z" fill="#7a7464"/>
<path d="M204 148 L214 147 L214 170 L204 171 Z" fill="#5e5e5a"/>
<path d="M200 178 L232 174 L232 182 L200 186 Z" fill="#3a3a2e"/>
<path d="M206 190 L220 189 L220 208 L206 209 Z" fill="#b09868"/>
<path d="M198 222 L232 220 L232 230 L198 232 Z" fill="#3a3a2e"/>
</g>
<path d="M0 258 L232 262 L232 420 L0 420 Z" fill="url(#p2road)"/>
<path d="M82 261 L106 261 L195 360 L25 360 Z" fill="url(#p2rc)" opacity="0.8" filter="url(#p2b5)"/>
<path d="M0 296 L34 294 L10 360 L0 360 Z" fill="#2e2d2a" filter="url(#p2b1)"/>
<g filter="url(#p2b1)">
<path d="M0 257 L17 257 L22 266 L23 284 L0 288 Z" fill="#e0e0e0"/>
<path d="M2 276 L12 276 L12 280 L2 280 Z" fill="#555"/>
<path d="M17 254 L36 254 L42 264 L42 280 L24 282 L22 265 Z" fill="#26282c"/>
<path d="M46 257 L60 257 L62 267 L47 267 Z" fill="#8a4448"/>
<path d="M111 257 L122 257 L123 267 L111 267 Z" fill="#cfcfcf"/>
<path d="M123 257 L150 257 L154 277 L125 278 Z" fill="#505256"/>
<path d="M176 272 L214 266 L232 274 L232 306 L190 310 L176 294 Z" fill="#1c1e22"/>
<path d="M189 271 L205 268 L207 279 L191 281 Z" fill="#7a6a5a"/>
<path d="M208 288 L232 282 L232 322 L210 318 Z" fill="#9a9ea2"/>
</g>
</g></svg>
<div class="t" style="left:1476px;top:1308.05px;font-size:24.4px;line-height:24.4px;color:#ececec;font-weight:normal;-webkit-text-stroke:0.35px #ececec;transform:scaleX(0.8050);transform-origin:0 0;">DSCF0003.JPG</div>
<div class="r" style="left:1888px;top:884px;width:315px;height:380px;background:#424242;border-radius:3px 0 0 3px;"></div>
<svg class="r" style="left:1962px;top:900px;overflow:hidden;" width="232" height="348" viewBox="0 0 232 348"><defs><linearGradient id="p3sky" x1="0" y1="0" x2="0" y2="1"><stop offset="0" stop-color="#86abd6"/><stop offset="0.15" stop-color="#9bb9dc"/><stop offset="0.32" stop-color="#bccde0"/><stop offset="0.45" stop-color="#b0c9e4"/><stop offset="0.62" stop-color="#bcd4ec"/><stop offset="0.78" stop-color="#d4e1ec"/></linearGradient>
<linearGradient id="p3road" x1="0" y1="0" x2="0" y2="1"><stop offset="0" stop-color="#34373c"/><stop offset="1" stop-color="#3a3f45"/></linearGradient>
<linearGradient id="p3rc" x1="0" y1="0" x2="0" y2="1"><stop offset="0" stop-color="#4a5058"/><stop offset="1" stop-color="#6a7682"/></linearGradient>
<filter id="p3b1" x="-10%" y="-10%" width="120%" height="120%"><feGaussianBlur stdDeviation="0.7"/></filter>
<filter id="p3b5" x="-30%" y="-30%" width="160%" height="160%"><feGaussianBlur stdDeviation="5"/></filter></defs>
<rect width="232" height="348" fill="url(#p3sky)"/>
<g filter="url(#p3b5)" opacity="0.8">
<path d="M-20 30 Q40 20 110 50 Q170 70 250 35 L250 62 Q170 95 105 78 Q45 60 -20 80 Z" fill="#e4eaf1"/>
<path d="M-20 92 Q70 78 130 96 Q190 112 250 88 L250 112 Q180 136 115 122 Q50 108 -20 132 Z" fill="#e6ebf0"/>
<path d="M-20 0 L60 0 Q30 30 -20 45 Z" fill="#dfe7ef"/>
<path d="M150 0 L250 0 L250 20 Q200 30 150 10 Z" fill="#c9d8e8"/>
</g>
<g transform="matrix(1,0,0,0.968,0,38)">
<path d="M0 48 Q45 54 89 61 Q160 58 232 55.5" stroke="#3d3d3d" stroke-width="0.6" fill="none"/>
<path d="M86 66 L92 66 L94 71 L84 71 Z" fill="#555"/>
<g filter="url(#p3b1)">
<path d="M0 144 L10 150 L24 164 L24 258 L0 258 Z" fill="#c6c8c8"/>
<path d="M0 176 L22 181 L22 198 L0 193 Z M0 207 L22 212 L22 228 L0 224 Z" fill="#8a9299"/>
<path d="M24 161 L31 162 L33 172 L40 176 L42 186 L51 192 L51 258 L24 258 Z" fill="#cdbfa8"/>
<path d="M28 190 L32 190 L32 204 L28 204 Z M37 198 L41 198 L41 212 L37 212 Z M28 218 L32 218 L32 232 L28 232 Z M37 226 L41 226 L41 240 L37 240 Z" fill="#6e6252"/>
<path d="M51 208 L57 207 L61 214 L61 258 L51 258 Z" fill="#b88a6c"/>
<path d="M60 244 Q66 234 72 240 L78 228 L84 240 Q92 236 100 242 Q108 238 114 246 L114 262 L60 262 Z" fill="#30372a"/>
<path d="M113 218 L124 212 L130 196 L138 187 L144 186 L144 262 L113 262 Z" fill="#a8746e"/>
<path d="M118 222 L122 222 L122 232 L118 232 Z M128 210 L132 210 L132 222 L128 222 Z M128 234 L132 234 L132 246 L128 246 Z M118 240 L122 240 L122 250 L118 250 Z" fill="#6a4644"/>
<path d="M144 160 L152 152 L160 156 L166 148 L172 147 L180 85 L187 147 L196 122 L196 266 L144 266 Z" fill="#645a44"/>
<path d="M146 175 L176 168 L176 266 L146 266 Z" fill="#a89058"/>
<path d="M150 178 L156 178 L156 194 L150 194 Z M164 174 L170 174 L170 192 L164 192 Z M150 208 L156 208 L156 224 L150 224 Z M164 206 L170 206 L170 222 L164 222 Z" fill="#5a4e34"/>
<path d="M156 236 L170 234 L170 266 L156 266 Z" fill="#c8a458"/>
<path d="M172 147 L180 85 L187 147 Z" fill="#6e685e"/>
<path d="M176 150 L196 122 L196 268 L176 268 Z" fill="#545040"/>
<path d="M194 122 L232 108 L232 272 L194 270 Z" fill="#4c4b3a"/>
<path d="M195 122 L207 68 L213 62 L214 41 L215 62 L222 68 L232 88 L232 132 L197 128 Z" fill="#2e2e30"/>
<path d="M207 68 L213 62 L214 41 L215 62 L222 68 L216 92 L202 104 Z" fill="#6a6256" opacity="0.8"/>
<path d="M202 136 L228 132 L228 175 L202 178 Z" fill="#7a7464"/>
<path d="M204 148 L214 147 L214 170 L204 171 Z" fill="#5e5e5a"/>
<path d="M200 178 L232 174 L232 182 L200 186 Z" fill="#3a3a2e"/>
<path d="M206 190 L220 189 L220 208 L206 209 Z" fill="#b09868"/>
<path d="M198 222 L232 220 L232 230 L198 232 Z" fill="#3a3a2e"/>
</g>
<path d="M0 258 L232 262 L232 420 L0 420 Z" fill="url(#p3road)"/>
<path d="M82 261 L106 261 L195 360 L25 360 Z" fill="url(#p3rc)" opacity="0.8" filter="url(#p3b5)"/>
<path d="M0 296 L34 294 L10 360 L0 360 Z" fill="#2e2d2a" filter="url(#p3b1)"/>
<g filter="url(#p3b1)">
<path d="M0 257 L17 257 L22 266 L23 284 L0 288 Z" fill="#e0e0e0"/>
<path d="M2 276 L12 276 L12 280 L2 280 Z" fill="#555"/>
<path d="M17 254 L36 254 L42 264 L42 280 L24 282 L22 265 Z" fill="#26282c"/>
<path d="M46 257 L60 257 L62 267 L47 267 Z" fill="#8a4448"/>
<path d="M111 257 L122 257 L123 267 L111 267 Z" fill="#cfcfcf"/>
<path d="M123 257 L150 257 L154 277 L125 278 Z" fill="#505256"/>
<path d="M176 272 L214 266 L232 274 L232 306 L190 310 L176 294 Z" fill="#1c1e22"/>
<path d="M189 271 L205 268 L207 279 L191 281 Z" fill="#7a6a5a"/>
<path d="M208 288 L232 282 L232 322 L210 318 Z" fill="#9a9ea2"/>
</g>
</g></svg>
<div class="t" style="left:1888px;top:1308.05px;font-size:24.4px;line-height:24.4px;color:#ececec;font-weight:normal;-webkit-text-stroke:0.35px #ececec;transform:scaleX(0.8050);transform-origin:0 0;">DSCF0003.RAF</div>
<div class="r" style="left:631px;top:1346px;width:32px;height:12px;background:#d6d6d6;border-radius:6px;"></div>
<div class="r" style="left:618px;top:1368px;width:1586px;height:2px;background:#474747;"></div>
<div class="t" style="left:662px;top:1390.23px;font-size:23px;line-height:23px;color:#e8e8e8;font-weight:normal;-webkit-text-stroke:0.35px #e8e8e8;transform:scaleX(0.9478);transform-origin:0 0;">556 items</div>
<div class="r" style="left:1179px;top:1398.5px;width:22px;height:3.0px;background:#e0e0e0;"></div>
<div class="r" style="left:1242px;top:1398px;width:38px;height:4px;background:#565656;border-radius:2px;"></div>
<div class="r" style="left:1324px;top:1398px;width:162px;height:4px;background:#565656;border-radius:2px;"></div>
<div class="r" style="left:1288px;top:1388px;width:28px;height:28px;background:transparent;border:3px solid #cfcfcf;border-radius:50%;box-sizing:border-box;"></div>
<svg class="r" style="left:1527px;top:1388px;" width="22" height="23" viewBox="0 0 22 23"><path d="M11 0 L11 23 M0 11.5 L22 11.5" stroke="#e6e6e6" stroke-width="3"/></svg>
<div class="r" style="left:1573px;top:1377px;width:2px;height:47px;background:#4a4a4a;"></div>
<svg class="r" style="left:1594px;top:1386px;" width="38" height="26" viewBox="0 0 38 26"><rect x="1" y="1" width="36" height="24" fill="none" stroke="#c6c6c6" stroke-width="2"/><path d="M13 1 L13 25 M25 1 L25 25 M1 13 L37 13" stroke="#c6c6c6" stroke-width="2"/></svg>
<div class="r" style="left:1653px;top:1377px;width:2px;height:47px;background:#4a4a4a;"></div>
<div class="r" style="left:1666px;top:1376px;width:56px;height:48px;background:#4a4a4a;border-radius:8px;"></div>
<svg class="r" style="left:1676px;top:1388px;" width="34" height="22" viewBox="0 0 34 22"><rect x="0" y="0" width="10" height="10" fill="#cfcfcf"/><rect x="0" y="12" width="10" height="10" fill="#cfcfcf"/><rect x="12" y="0" width="10" height="10" fill="#cfcfcf"/><rect x="12" y="12" width="10" height="10" fill="#cfcfcf"/><rect x="24" y="0" width="10" height="10" fill="#cfcfcf"/><rect x="24" y="12" width="10" height="10" fill="#cfcfcf"/></svg>
<svg class="r" style="left:1742px;top:1390px;" width="35" height="17" viewBox="0 0 35 17"><rect x="0" y="0" width="20" height="17" fill="#cfcfcf"/><rect x="23" y="0" width="12" height="3.5" fill="#cfcfcf"/><rect x="23" y="6.5" width="12" height="3.5" fill="#cfcfcf"/><rect x="23" y="13" width="12" height="3.5" fill="#cfcfcf"/></svg>
<svg class="r" style="left:1810px;top:1390px;" width="33" height="18" viewBox="0 0 33 18"><rect x="0" y="0" width="7" height="7" fill="#cfcfcf"/><rect x="0" y="11" width="7" height="7" fill="#cfcfcf"/><rect x="11" y="1.5" width="22" height="3.5" fill="#cfcfcf"/><rect x="11" y="12.5" width="22" height="3.5" fill="#cfcfcf"/></svg>
<div class="r" style="left:1866px;top:1377px;width:2px;height:47px;background:#4a4a4a;"></div>
<svg class="r" style="left:1878px;top:1388px;" width="25" height="25" viewBox="0 0 25 25"><rect x="0" y="0" width="25" height="25" rx="3" fill="#cdcdcd"/><path d="M5.5 12.5 L10 17 L19 7.5" fill="none" stroke="#5c5c5c" stroke-width="3.4"/></svg>
<div class="t" style="left:1919.7px;top:1389.19px;font-size:23.4px;line-height:23.4px;color:#ececec;font-weight:normal;-webkit-text-stroke:0.35px #ececec;transform:scaleX(0.8921);transform-origin:0 0;">Tiles</div>
<div class="r" style="left:1980px;top:1388px;width:24px;height:24px;background:#242424;border:3.5px solid #b4b4b4;border-radius:4px;box-sizing:border-box;"></div>
<div class="t" style="left:2022.5px;top:1389.19px;font-size:23.4px;line-height:23.4px;color:#ececec;font-weight:normal;-webkit-text-stroke:0.35px #ececec;transform:scaleX(0.9427);transform-origin:0 0;">Thumbnails Only</div>
<div class="r" style="left:2206px;top:102px;width:8px;height:1326px;background:#1d1d1d;"></div>
<div class="r" style="left:2214px;top:102px;width:663px;height:1326px;background:#323232;"></div>
<div class="r" style="left:2240px;top:268px;width:612px;height:2px;background:#5a5a5a;"></div>
<div class="r" style="left:2240px;top:362px;width:580px;height:68px;background:#474747;border-radius:8px;"></div>
<div class="r" style="left:2240px;top:438px;width:580px;height:68px;background:#474747;border-radius:8px;"></div>
<div class="r" style="left:2240px;top:514px;width:580px;height:68px;background:#474747;border-radius:8px;"></div>
<div class="r" style="left:2240px;top:590px;width:580px;height:68px;background:#474747;border-radius:8px;"></div>
<div class="t" style="left:2259px;top:615.95px;font-size:22.5px;line-height:22.5px;color:#c0c0c0;font-weight:normal;-webkit-text-stroke:0.15px #c0c0c0;transform:scaleX(1.0375);transform-origin:0 0;">Your Library</div>
<div class="t" style="left:2408px;top:699.45px;font-size:22.5px;line-height:22.5px;color:#8e8e8e;font-weight:normal;text-decoration:underline;text-decoration-thickness:1.5px;text-underline-offset:3px;-webkit-text-stroke:0.1px #8e8e8e;transform:scaleX(1.0367);transform-origin:0 0;">Browse shared libraries</div>
<div class="t" style="left:2390px;top:737.45px;font-size:22.5px;line-height:22.5px;color:#8e8e8e;font-weight:normal;text-decoration:underline;text-decoration-thickness:1.5px;text-underline-offset:3px;-webkit-text-stroke:0.1px #8e8e8e;transform:scaleX(1.0463);transform-origin:0 0;">Go to Stock &amp; Marketplace</div>
<div class="r" style="left:2844px;top:362px;width:32px;height:1019px;background:#424242;"></div>
<div class="r" style="left:2214px;top:1380px;width:630px;height:2px;background:#474747;"></div>
<svg class="r" style="left:2248px;top:1395px;" width="33" height="21" viewBox="0 0 33 21"><path d="M6 21 Q0 21 0 15.5 Q0 10.5 5.5 10 Q6.5 4 12.5 4 Q15 0 20 0 Q26 0 27 7 Q33 8 33 14.5 Q33 21 26 21 Z" fill="#d6d6d6"/></svg>
<svg class="r" style="left:2814px;top:1393px;" width="38" height="28" viewBox="0 0 38 28"><path d="M12 1 L12 25 M0 13 L24 13" stroke="#e6e6e6" stroke-width="4"/><path d="M21.5 21 L30.5 21 L26 27 Z" fill="#e6e6e6"/></svg>
<div class="r" style="left:2180px;top:84px;width:506px;height:526px;background:#c6c6c9;border-radius:12px;box-shadow:0 0 0 1px rgba(0,0,0,0.55),0 4px 14px rgba(0,0,0,0.25);"></div>
<div class="r" style="left:2190px;top:402px;width:486px;height:43.5px;background:#1f6fdd;border-radius:7px;"></div>
<div class="r" style="left:2209px;top:148px;width:449px;height:2px;background:#adadb0;"></div>
<div class="r" style="left:2209px;top:258px;width:449px;height:2px;background:#adadb0;"></div>
<div class="r" style="left:2209px;top:499px;width:449px;height:2px;background:#adadb0;"></div>
<div class="t" style="left:2208.5px;top:104.89px;font-size:24.7px;line-height:24.7px;color:#1e1e1e;font-weight:normal;-webkit-text-stroke:0.25px #1e1e1e;transform:scaleX(1.0810);transform-origin:0 0;">Clear Filter</div>
<svg class="r" style="left:2589px;top:107.8px;" width="21" height="18" viewBox="0 0 21 18"><path d="M1 1.5 L7.5 1.5 L14 16.5 L20 16.5 M13 1.5 L20 1.5" fill="none" stroke="#8a8a8a" stroke-width="2.2"/></svg>
<svg class="r" style="left:2617px;top:107.3px;" width="19" height="19" viewBox="0 0 19 19"><path d="M6.5 6.5 L12.5 6.5 L12.5 12.5 L6.5 12.5 Z M6.5 6.5 L6.5 3.8 A2.7 2.7 0 1 0 3.8 6.5 L6.5 6.5 M12.5 6.5 L15.2 6.5 A2.7 2.7 0 1 0 12.5 3.8 Z M12.5 12.5 L12.5 15.2 A2.7 2.7 0 1 0 15.2 12.5 Z M6.5 12.5 L3.8 12.5 A2.7 2.7 0 1 0 6.5 15.2 Z" fill="none" stroke="#8a8a8a" stroke-width="2"/></svg>
<div class="t" style="left:2645px;top:105.48px;font-size:24px;line-height:24px;color:#8a8a8a;font-weight:normal;-webkit-text-stroke:0.35px #8a8a8a;">A</div>
<div class="t" style="left:2208.5px;top:171.09px;font-size:24.7px;line-height:24.7px;color:#1e1e1e;font-weight:normal;-webkit-text-stroke:0.25px #1e1e1e;transform:scaleX(1.0810);transform-origin:0 0;">Show Rejected Items Only</div>
<div class="t" style="left:2208.5px;top:215.39px;font-size:24.7px;line-height:24.7px;color:#1e1e1e;font-weight:normal;-webkit-text-stroke:0.25px #1e1e1e;transform:scaleX(1.0810);transform-origin:0 0;">Show Unrated Items Only</div>
<div class="t" style="left:2208.5px;top:280.09px;font-size:24.7px;line-height:24.7px;color:#1e1e1e;font-weight:normal;-webkit-text-stroke:0.25px #1e1e1e;transform:scaleX(1.0810);transform-origin:0 0;">Show 1 or More Stars</div>
<svg class="r" style="left:2589px;top:283px;" width="21" height="18" viewBox="0 0 21 18"><path d="M1 1.5 L7.5 1.5 L14 16.5 L20 16.5 M13 1.5 L20 1.5" fill="none" stroke="#8a8a8a" stroke-width="2.2"/></svg>
<svg class="r" style="left:2617px;top:282.5px;" width="19" height="19" viewBox="0 0 19 19"><path d="M6.5 6.5 L12.5 6.5 L12.5 12.5 L6.5 12.5 Z M6.5 6.5 L6.5 3.8 A2.7 2.7 0 1 0 3.8 6.5 L6.5 6.5 M12.5 6.5 L15.2 6.5 A2.7 2.7 0 1 0 12.5 3.8 Z M12.5 12.5 L12.5 15.2 A2.7 2.7 0 1 0 15.2 12.5 Z M6.5 12.5 L3.8 12.5 A2.7 2.7 0 1 0 6.5 15.2 Z" fill="none" stroke="#8a8a8a" stroke-width="2"/></svg>
<div class="t" style="left:2645px;top:280.68px;font-size:24px;line-height:24px;color:#8a8a8a;font-weight:normal;-webkit-text-stroke:0.35px #8a8a8a;">1</div>
<div class="t" style="left:2208.5px;top:324.09px;font-size:24.7px;line-height:24.7px;color:#1e1e1e;font-weight:normal;-webkit-text-stroke:0.25px #1e1e1e;transform:scaleX(1.0810);transform-origin:0 0;">Show 2 or More Stars</div>
<svg class="r" style="left:2589px;top:327px;" width="21" height="18" viewBox="0 0 21 18"><path d="M1 1.5 L7.5 1.5 L14 16.5 L20 16.5 M13 1.5 L20 1.5" fill="none" stroke="#8a8a8a" stroke-width="2.2"/></svg>
<svg class="r" style="left:2617px;top:326.5px;" width="19" height="19" viewBox="0 0 19 19"><path d="M6.5 6.5 L12.5 6.5 L12.5 12.5 L6.5 12.5 Z M6.5 6.5 L6.5 3.8 A2.7 2.7 0 1 0 3.8 6.5 L6.5 6.5 M12.5 6.5 L15.2 6.5 A2.7 2.7 0 1 0 12.5 3.8 Z M12.5 12.5 L12.5 15.2 A2.7 2.7 0 1 0 15.2 12.5 Z M6.5 12.5 L3.8 12.5 A2.7 2.7 0 1 0 6.5 15.2 Z" fill="none" stroke="#8a8a8a" stroke-width="2"/></svg>
<div class="t" style="left:2645px;top:324.68px;font-size:24px;line-height:24px;color:#8a8a8a;font-weight:normal;-webkit-text-stroke:0.35px #8a8a8a;">2</div>
<div class="t" style="left:2208.5px;top:368.59px;font-size:24.7px;line-height:24.7px;color:#1e1e1e;font-weight:normal;-webkit-text-stroke:0.25px #1e1e1e;transform:scaleX(1.0810);transform-origin:0 0;">Show 3 or More Stars</div>
<svg class="r" style="left:2589px;top:371.5px;" width="21" height="18" viewBox="0 0 21 18"><path d="M1 1.5 L7.5 1.5 L14 16.5 L20 16.5 M13 1.5 L20 1.5" fill="none" stroke="#8a8a8a" stroke-width="2.2"/></svg>
<svg class="r" style="left:2617px;top:371.0px;" width="19" height="19" viewBox="0 0 19 19"><path d="M6.5 6.5 L12.5 6.5 L12.5 12.5 L6.5 12.5 Z M6.5 6.5 L6.5 3.8 A2.7 2.7 0 1 0 3.8 6.5 L6.5 6.5 M12.5 6.5 L15.2 6.5 A2.7 2.7 0 1 0 12.5 3.8 Z M12.5 12.5 L12.5 15.2 A2.7 2.7 0 1 0 15.2 12.5 Z M6.5 12.5 L3.8 12.5 A2.7 2.7 0 1 0 6.5 15.2 Z" fill="none" stroke="#8a8a8a" stroke-width="2"/></svg>
<div class="t" style="left:2645px;top:369.18px;font-size:24px;line-height:24px;color:#8a8a8a;font-weight:normal;-webkit-text-stroke:0.35px #8a8a8a;">3</div>
<div class="t" style="left:2208.5px;top:412.89px;font-size:24.7px;line-height:24.7px;color:#ffffff;font-weight:normal;-webkit-text-stroke:0.25px #ffffff;transform:scaleX(1.0810);transform-origin:0 0;">Show 4 or More Stars</div>
<svg class="r" style="left:2589px;top:415.8px;" width="21" height="18" viewBox="0 0 21 18"><path d="M1 1.5 L7.5 1.5 L14 16.5 L20 16.5 M13 1.5 L20 1.5" fill="none" stroke="#ffffff" stroke-width="2.2"/></svg>
<svg class="r" style="left:2617px;top:415.3px;" width="19" height="19" viewBox="0 0 19 19"><path d="M6.5 6.5 L12.5 6.5 L12.5 12.5 L6.5 12.5 Z M6.5 6.5 L6.5 3.8 A2.7 2.7 0 1 0 3.8 6.5 L6.5 6.5 M12.5 6.5 L15.2 6.5 A2.7 2.7 0 1 0 12.5 3.8 Z M12.5 12.5 L12.5 15.2 A2.7 2.7 0 1 0 15.2 12.5 Z M6.5 12.5 L3.8 12.5 A2.7 2.7 0 1 0 6.5 15.2 Z" fill="none" stroke="#ffffff" stroke-width="2"/></svg>
<div class="t" style="left:2645px;top:413.48px;font-size:24px;line-height:24px;color:#ffffff;font-weight:normal;-webkit-text-stroke:0.35px #ffffff;">4</div>
<div class="t" style="left:2208.5px;top:456.89px;font-size:24.7px;line-height:24.7px;color:#1e1e1e;font-weight:normal;-webkit-text-stroke:0.25px #1e1e1e;transform:scaleX(1.0810);transform-origin:0 0;">Show 5 Stars</div>
<svg class="r" style="left:2589px;top:459.8px;" width="21" height="18" viewBox="0 0 21 18"><path d="M1 1.5 L7.5 1.5 L14 16.5 L20 16.5 M13 1.5 L20 1.5" fill="none" stroke="#8a8a8a" stroke-width="2.2"/></svg>
<svg class="r" style="left:2617px;top:459.3px;" width="19" height="19" viewBox="0 0 19 19"><path d="M6.5 6.5 L12.5 6.5 L12.5 12.5 L6.5 12.5 Z M6.5 6.5 L6.5 3.8 A2.7 2.7 0 1 0 3.8 6.5 L6.5 6.5 M12.5 6.5 L15.2 6.5 A2.7 2.7 0 1 0 12.5 3.8 Z M12.5 12.5 L12.5 15.2 A2.7 2.7 0 1 0 15.2 12.5 Z M6.5 12.5 L3.8 12.5 A2.7 2.7 0 1 0 6.5 15.2 Z" fill="none" stroke="#8a8a8a" stroke-width="2"/></svg>
<div class="t" style="left:2645px;top:457.48px;font-size:24px;line-height:24px;color:#8a8a8a;font-weight:normal;-webkit-text-stroke:0.35px #8a8a8a;">5</div>
<div class="t" style="left:2208.5px;top:522.89px;font-size:24.7px;line-height:24.7px;color:#1e1e1e;font-weight:normal;-webkit-text-stroke:0.25px #1e1e1e;transform:scaleX(1.0810);transform-origin:0 0;">Show Labeled Items Only</div>
<div class="t" style="left:2208.5px;top:566.89px;font-size:24.7px;line-height:24.7px;color:#1e1e1e;font-weight:normal;-webkit-text-stroke:0.25px #1e1e1e;transform:scaleX(1.0810);transform-origin:0 0;">Show Unlabeled Items Only</div>
<div class="r" style="left:2877px;top:0px;width:3px;height:1428px;background:#1d1d1d;"></div>
</body></html>
